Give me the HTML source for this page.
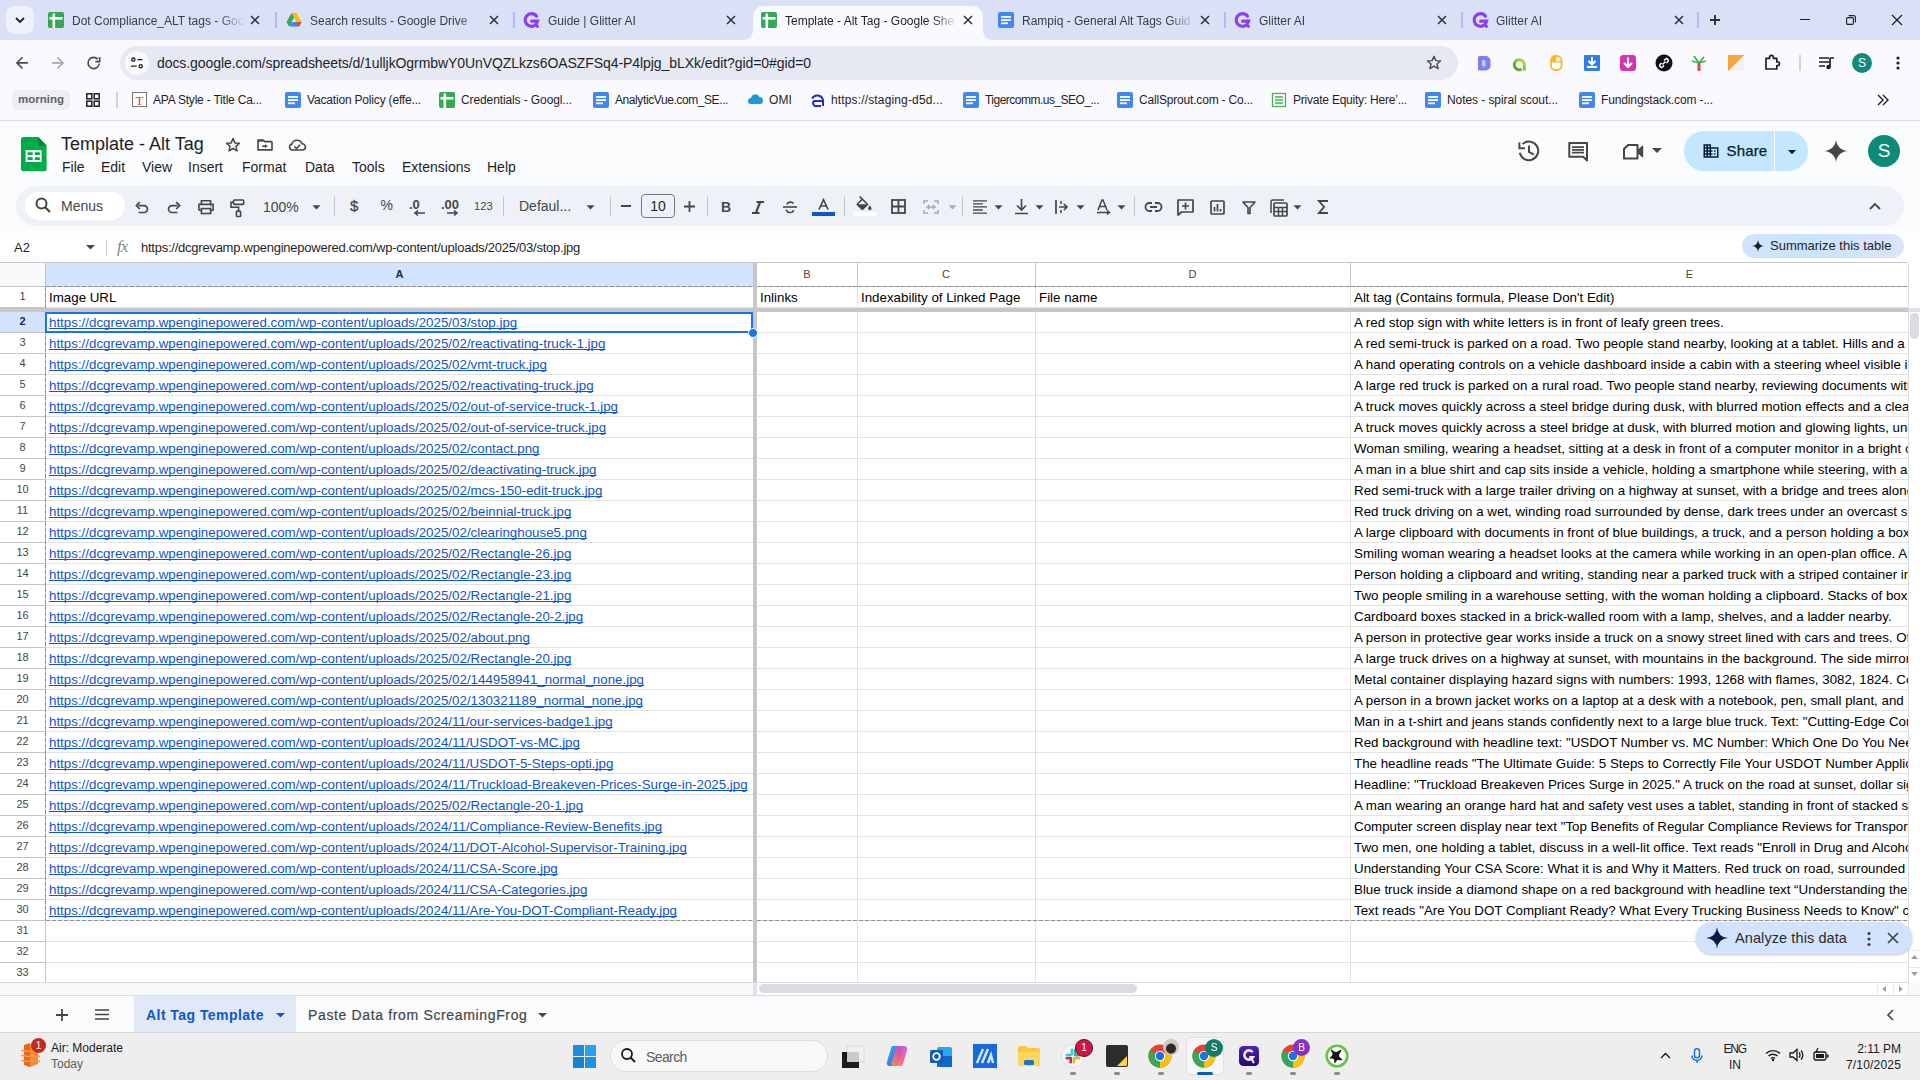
<!DOCTYPE html><html><head><meta charset="utf-8"><style>html,body{margin:0;padding:0;width:1920px;height:1080px;overflow:hidden;position:relative;font-family:"Liberation Sans",sans-serif;background:#fff}svg{overflow:visible}</style></head><body><div style="position:absolute;left:0px;top:0px;width:1920px;height:40px;background:#dae1f7"></div>
<div style="position:absolute;left:6px;top:6px;width:28px;height:28px;background:#eef1fb;border-radius:8px"></div>
<svg style="position:absolute;left:14px;top:14px;" width="12" height="12" viewBox="0 0 12 12"><path d="M2 4l4 4 4-4" fill="none" stroke="#1f1f1f" stroke-width="1.8"/></svg>
<div style="position:absolute;left:753px;top:6px;width:230px;height:34px;background:#f9f9fe;border-radius:10px 10px 0 0"></div>
<svg style="position:absolute;left:743px;top:30px;" width="10" height="10" viewBox="0 0 10 10"><path d="M0 10 Q10 10 10 0 L10 10 Z" fill="#f9f9fe"/></svg>
<svg style="position:absolute;left:983px;top:30px;" width="10" height="10" viewBox="0 0 10 10"><path d="M10 10 Q0 10 0 0 L0 10 Z" fill="#f9f9fe"/></svg>
<svg style="position:absolute;left:48px;top:12px;" width="16" height="16" viewBox="0 0 16 16"><rect x="0" y="0" width="16" height="16" rx="2" fill="#34a853"/><rect x="1.5" y="5" width="13" height="2.6" fill="#fff"/><rect x="4.5" y="1.5" width="2.6" height="14.5" fill="#fff"/></svg>
<div style="position:absolute;left:72px;top:13px;width:173px;height:16px;overflow:hidden;font-size:12px;line-height:16px;color:#3a3d44;white-space:pre;-webkit-mask-image:linear-gradient(90deg,#000 85%,transparent)">Dot Compliance_ALT tags - Goc</div>
<svg style="position:absolute;left:250px;top:15px;" width="10" height="10" viewBox="0 0 10 10"><path d="M1 1L9 9M9 1L1 9" stroke="#2d2f33" stroke-width="1.5"/></svg>
<svg style="position:absolute;left:286px;top:12px;" width="16" height="16" viewBox="0 0 16 16"><path d="M5.5 1h5l5 9h-5z" fill="#fbbc04"/><path d="M5.5 1L0.5 10l2.5 4.5L8 5.5z" fill="#34a853"/><path d="M3 14.5h10l2.5-4.5h-10z" fill="#4285f4"/><path d="M15.5 10L13 14.5 10.5 10z" fill="#ea4335"/></svg>
<div style="position:absolute;left:310px;top:13px;width:174px;height:16px;overflow:hidden;font-size:12px;line-height:16px;color:#3a3d44;white-space:pre;-webkit-mask-image:linear-gradient(90deg,#000 85%,transparent)">Search results - Google Drive</div>
<svg style="position:absolute;left:489px;top:15px;" width="10" height="10" viewBox="0 0 10 10"><path d="M1 1L9 9M9 1L1 9" stroke="#2d2f33" stroke-width="1.5"/></svg>
<svg style="position:absolute;left:523px;top:12px;" width="17" height="17" viewBox="0 0 17 17"><path d="M13.5 4.2A6.3 6.3 0 1 0 14.6 9.2H8.6" fill="none" stroke="#8b3ff0" stroke-width="3.2" stroke-linecap="round"/><circle cx="14.3" cy="14.3" r="1.6" fill="#8b3ff0"/></svg>
<div style="position:absolute;left:548px;top:13px;width:173px;height:16px;overflow:hidden;font-size:12px;line-height:16px;color:#3a3d44;white-space:pre;-webkit-mask-image:linear-gradient(90deg,#000 85%,transparent)">Guide | Glitter AI</div>
<svg style="position:absolute;left:726px;top:15px;" width="10" height="10" viewBox="0 0 10 10"><path d="M1 1L9 9M9 1L1 9" stroke="#2d2f33" stroke-width="1.5"/></svg>
<svg style="position:absolute;left:761px;top:12px;" width="16" height="16" viewBox="0 0 16 16"><rect x="0" y="0" width="16" height="16" rx="2" fill="#34a853"/><rect x="1.5" y="5" width="13" height="2.6" fill="#fff"/><rect x="4.5" y="1.5" width="2.6" height="14.5" fill="#fff"/></svg>
<div style="position:absolute;left:785px;top:13px;width:173px;height:16px;overflow:hidden;font-size:12px;line-height:16px;color:#1f1f1f;white-space:pre;-webkit-mask-image:linear-gradient(90deg,#000 85%,transparent)">Template - Alt Tag - Google She</div>
<svg style="position:absolute;left:963px;top:15px;" width="10" height="10" viewBox="0 0 10 10"><path d="M1 1L9 9M9 1L1 9" stroke="#2d2f33" stroke-width="1.5"/></svg>
<svg style="position:absolute;left:998px;top:12px;" width="16" height="16" viewBox="0 0 16 16"><rect x="0" y="0" width="16" height="16" rx="2" fill="#4285f4"/><rect x="3" y="4" width="10" height="1.8" fill="#fff"/><rect x="3" y="7.2" width="10" height="1.8" fill="#fff"/><rect x="3" y="10.4" width="7" height="1.8" fill="#fff"/></svg>
<div style="position:absolute;left:1022px;top:13px;width:173px;height:16px;overflow:hidden;font-size:12px;line-height:16px;color:#3a3d44;white-space:pre;-webkit-mask-image:linear-gradient(90deg,#000 85%,transparent)">Rampiq - General Alt Tags Guid</div>
<svg style="position:absolute;left:1200px;top:15px;" width="10" height="10" viewBox="0 0 10 10"><path d="M1 1L9 9M9 1L1 9" stroke="#2d2f33" stroke-width="1.5"/></svg>
<svg style="position:absolute;left:1234px;top:12px;" width="17" height="17" viewBox="0 0 17 17"><path d="M13.5 4.2A6.3 6.3 0 1 0 14.6 9.2H8.6" fill="none" stroke="#8b3ff0" stroke-width="3.2" stroke-linecap="round"/><circle cx="14.3" cy="14.3" r="1.6" fill="#8b3ff0"/></svg>
<div style="position:absolute;left:1259px;top:13px;width:173px;height:16px;overflow:hidden;font-size:12px;line-height:16px;color:#3a3d44;white-space:pre;-webkit-mask-image:linear-gradient(90deg,#000 85%,transparent)">Glitter AI</div>
<svg style="position:absolute;left:1437px;top:15px;" width="10" height="10" viewBox="0 0 10 10"><path d="M1 1L9 9M9 1L1 9" stroke="#2d2f33" stroke-width="1.5"/></svg>
<svg style="position:absolute;left:1472px;top:12px;" width="17" height="17" viewBox="0 0 17 17"><path d="M13.5 4.2A6.3 6.3 0 1 0 14.6 9.2H8.6" fill="none" stroke="#8b3ff0" stroke-width="3.2" stroke-linecap="round"/><circle cx="14.3" cy="14.3" r="1.6" fill="#8b3ff0"/></svg>
<div style="position:absolute;left:1496px;top:13px;width:173px;height:16px;overflow:hidden;font-size:12px;line-height:16px;color:#3a3d44;white-space:pre;-webkit-mask-image:linear-gradient(90deg,#000 85%,transparent)">Glitter AI</div>
<svg style="position:absolute;left:1674px;top:15px;" width="10" height="10" viewBox="0 0 10 10"><path d="M1 1L9 9M9 1L1 9" stroke="#2d2f33" stroke-width="1.5"/></svg>
<div style="position:absolute;left:275px;top:12px;width:1.5px;height:16px;background:#a8c0f4"></div>
<div style="position:absolute;left:513px;top:12px;width:1.5px;height:16px;background:#a8c0f4"></div>
<div style="position:absolute;left:1224px;top:12px;width:1.5px;height:16px;background:#a8c0f4"></div>
<div style="position:absolute;left:1461px;top:12px;width:1.5px;height:16px;background:#a8c0f4"></div>
<div style="position:absolute;left:1697px;top:12px;width:1.5px;height:16px;background:#a8c0f4"></div>
<svg style="position:absolute;left:1710px;top:15px;" width="10" height="10" viewBox="0 0 10 10"><path d="M5 0V10M0 5H10" stroke="#2d2f33" stroke-width="1.9"/></svg>
<div style="position:absolute;left:1800px;top:19px;width:10px;height:1px;background:#1f1f1f"></div>
<svg style="position:absolute;left:1846px;top:15px;" width="10" height="10" viewBox="0 0 10 10"><rect x="0.6" y="2.6" width="6.8" height="6.8" rx="1.2" fill="none" stroke="#1f1f1f" stroke-width="1.1"/><path d="M2.6 0.6H7.8A1.6 1.6 0 0 1 9.4 2.2V7.4" fill="none" stroke="#1f1f1f" stroke-width="1.1"/></svg>
<svg style="position:absolute;left:1891px;top:14px;" width="12" height="12" viewBox="0 0 12 12"><path d="M1 1L11 11M11 1L1 11" stroke="#1f1f1f" stroke-width="1.3"/></svg>
<div style="position:absolute;left:0px;top:40px;width:1920px;height:81px;background:#f9f9fe"></div>
<svg style="position:absolute;left:14px;top:55px;" width="16" height="16" viewBox="0 0 16 16"><path d="M13.9 7.9H3.2M8.5 2.3L2.9 7.9l5.6 5.6" fill="none" stroke="#474b55" stroke-width="1.6"/></svg>
<svg style="position:absolute;left:50px;top:55px;" width="16" height="16" viewBox="0 0 16 16"><path d="M2 7.9H12.7M7.4 2.3l5.6 5.6-5.6 5.6" fill="none" stroke="#a5a8b0" stroke-width="1.6"/></svg>
<svg style="position:absolute;left:86px;top:55px;" width="16" height="16" viewBox="0 0 16 16"><path d="M13.2 8.6A5.6 5.6 0 1 1 11.7 4.1" fill="none" stroke="#474b55" stroke-width="1.6"/><path d="M13.7 2.1V6.6H9.3" fill="none" stroke="#474b55" stroke-width="1.6"/></svg>
<div style="position:absolute;left:120px;top:46px;width:1338px;height:34px;background:#e6e9f3;border-radius:17px"></div>
<div style="position:absolute;left:125px;top:51px;width:24px;height:24px;background:#f8f9fe;border-radius:12px"></div>
<svg style="position:absolute;left:129px;top:55px;" width="16" height="16" viewBox="0 0 16 16"><circle cx="4.3" cy="4.6" r="1.6" fill="none" stroke="#1f1f1f" stroke-width="1.3"/><path d="M8.4 4.6h5M2 11.2h5.7" stroke="#1f1f1f" stroke-width="1.3"/><circle cx="11.7" cy="11.2" r="1.6" fill="none" stroke="#1f1f1f" stroke-width="1.3"/></svg>
<div style="position:absolute;left:157px;top:56.15px;font-size:14px;line-height:14px;color:#1f1f1f;font-weight:400;white-space:pre;letter-spacing:-0.073px;">docs.google.com/spreadsheets/d/1ulljkOgrmbwY0UnVQZLkzs6OASZFSq4-P4lpjg_bLXk/edit?gid=0#gid=0</div>
<svg style="position:absolute;left:1426px;top:55px;" width="16" height="16" viewBox="0 0 16 16"><path d="M8 1.3l1.9 4.3 4.6.4-3.5 3 1.1 4.6L8 11.1 3.9 13.6 5 9 1.5 6l4.6-.4z" fill="none" stroke="#474b55" stroke-width="1.4" stroke-linejoin="round"/></svg>
<svg style="position:absolute;left:1478px;top:55.5px;" width="13" height="14.5" viewBox="0 0 13 14.5"><path d="M0 1.5A1.5 1.5 0 0 1 1.5 0H7.5A5 5 0 0 1 12.5 5V9.5A5 5 0 0 1 7.5 14.5H1.5A1.5 1.5 0 0 1 0 13z" fill="#7b7ff5"/><rect x="4" y="4" width="3.5" height="6.5" rx="0.8" fill="#c9cbfb"/></svg>
<svg style="position:absolute;left:1512px;top:55.5px;" width="15" height="15" viewBox="0 0 15 15"><defs><linearGradient id="ag" x1="0" y1="1" x2="1" y2="0"><stop offset="0" stop-color="#3e9a1f"/><stop offset="1" stop-color="#b9e23c"/></linearGradient></defs><path d="M9.6 13.1A5 5 0 1 1 12.3 8.6V14.6" fill="none" stroke="url(#ag)" stroke-width="2.9"/></svg>
<svg style="position:absolute;left:1549.5px;top:55px;" width="12.5" height="16" viewBox="0 0 12.5 16"><rect x="1" y="1" width="10.5" height="14" rx="4.5" fill="#fff" stroke="#fbb823" stroke-width="1.8"/><path d="M1 6.5V5.5A4.5 4.5 0 0 1 5.5 1H6.2V6.5z" fill="#fbb823"/><path d="M1 6.8H11.5" stroke="#fbb823" stroke-width="1.3"/></svg>
<svg style="position:absolute;left:1583px;top:54px;" width="18" height="18" viewBox="0 0 18 18"><rect x="1" y="1" width="16" height="16" rx="1" fill="#2f7fe6"/><path d="M9 3v7M5.5 7l3.5 3.5L12.5 7M4 13h10" stroke="#fff" stroke-width="2" fill="none"/></svg>
<svg style="position:absolute;left:1619px;top:54px;" width="18" height="18" viewBox="0 0 18 18"><rect x="1" y="1" width="16" height="16" rx="3" fill="#d633b5"/><path d="M9 3.5v9M5 9l4 4 4-4" stroke="#fff" stroke-width="2.2" fill="none"/></svg>
<svg style="position:absolute;left:1655px;top:54px;" width="18" height="18" viewBox="0 0 18 18"><circle cx="9" cy="9" r="8.5" fill="#111"/><path d="M7.5 10.5l3-3M6.5 9l-1.5 1.5a1.8 1.8 0 0 0 2.5 2.5L9 11.5M11.5 9l1.5-1.5a1.8 1.8 0 0 0-2.5-2.5L9 6.5" stroke="#fff" stroke-width="1.5" fill="none"/></svg>
<svg style="position:absolute;left:1690px;top:54px;" width="18" height="18" viewBox="0 0 18 18"><path d="M9 17V8" stroke="#d94a4a" stroke-width="3"/><path d="M9 9L4 2M9 9l5-6M9 9L2 7M9 9l7-2" stroke="#4caf50" stroke-width="1.8"/></svg>
<svg style="position:absolute;left:1727px;top:54px;" width="18" height="18" viewBox="0 0 18 18"><rect x="1" y="1" width="16" height="16" fill="#f4c26a"/><path d="M1 17L17 1V17z" fill="#f1f1f1"/><path d="M1 1h16L1 17z" fill="#f6a53a"/></svg>
<svg style="position:absolute;left:1764px;top:54px;" width="17" height="16" viewBox="0 0 17 16"><path d="M2 4.3H5.6V3.2a1.9 1.9 0 0 1 3.8 0V4.3H12.8V7.8H13.6a1.9 1.9 0 0 1 0 3.8H12.8V15H2z" fill="none" stroke="#1f1f1f" stroke-width="1.7" stroke-linejoin="round"/></svg>
<div style="position:absolute;left:1799px;top:55px;width:1.5px;height:16px;background:#c5d3f5"></div>
<svg style="position:absolute;left:1817px;top:54px;" width="18" height="18" viewBox="0 0 18 18"><path d="M2 4h10M2 8h10M2 12h6" stroke="#1f1f1f" stroke-width="1.7"/><path d="M13 4h4M13 4v9" stroke="#1f1f1f" stroke-width="1.7"/><circle cx="11.5" cy="13" r="2.2" fill="#1f1f1f"/></svg>
<div style="position:absolute;left:1852px;top:53px;width:20px;height:20px;border-radius:10px;background:#128a7a;color:#fff;font-size:12px;line-height:20px;text-align:center">S</div>
<svg style="position:absolute;left:1894px;top:54px;" width="8" height="18" viewBox="0 0 8 18"><circle cx="4" cy="4" r="1.6" fill="#1f1f1f"/><circle cx="4" cy="9" r="1.6" fill="#1f1f1f"/><circle cx="4" cy="14" r="1.6" fill="#1f1f1f"/></svg>
<div style="position:absolute;left:12px;top:90px;width:58px;height:20px;background:#eceef4;border-radius:6px"></div>
<div style="position:absolute;left:18px;top:94.27px;font-size:11.5px;line-height:11.5px;color:#5f6368;font-weight:700;white-space:pre;">morning</div>
<svg style="position:absolute;left:86px;top:93px;" width="14" height="14" viewBox="0 0 14 14"><rect x="0.8" y="0.8" width="5" height="5" fill="none" stroke="#1f1f1f" stroke-width="1.5"/><rect x="8.2" y="0.8" width="5" height="5" fill="none" stroke="#1f1f1f" stroke-width="1.5"/><rect x="0.8" y="8.2" width="5" height="5" fill="none" stroke="#1f1f1f" stroke-width="1.5"/><rect x="8.2" y="8.2" width="5" height="5" fill="none" stroke="#1f1f1f" stroke-width="1.5"/></svg>
<div style="position:absolute;left:116px;top:92px;width:1.5px;height:16px;background:#c5d3f5"></div>
<svg style="position:absolute;left:132px;top:92px;" width="15" height="15" viewBox="0 0 15 15"><rect x="0.5" y="0.5" width="14" height="14" fill="#fff" stroke="#777" stroke-width="1"/><text x="7.5" y="12.5" font-size="13" font-family="Liberation Serif" text-anchor="middle" fill="#e33">T</text></svg>
<div style="position:absolute;left:153px;top:94.34px;font-size:12px;line-height:12px;color:#1f1f1f;font-weight:400;white-space:pre;letter-spacing:-0.210px;">APA Style - Title Ca...</div>
<svg style="position:absolute;left:285px;top:92px;" width="16" height="16" viewBox="0 0 16 16"><rect x="0" y="0" width="16" height="16" rx="2" fill="#4285f4"/><rect x="3" y="4" width="10" height="1.8" fill="#fff"/><rect x="3" y="7.2" width="10" height="1.8" fill="#fff"/><rect x="3" y="10.4" width="7" height="1.8" fill="#fff"/></svg>
<div style="position:absolute;left:307px;top:94.34px;font-size:12px;line-height:12px;color:#1f1f1f;font-weight:400;white-space:pre;letter-spacing:-0.179px;">Vacation Policy (effe...</div>
<svg style="position:absolute;left:439px;top:92px;" width="16" height="16" viewBox="0 0 16 16"><rect x="0" y="0" width="16" height="16" rx="2" fill="#34a853"/><rect x="1.5" y="5" width="13" height="2.6" fill="#fff"/><rect x="4.5" y="1.5" width="2.6" height="14.5" fill="#fff"/></svg>
<div style="position:absolute;left:461px;top:94.34px;font-size:12px;line-height:12px;color:#1f1f1f;font-weight:400;white-space:pre;letter-spacing:-0.109px;">Credentials - Googl...</div>
<svg style="position:absolute;left:593px;top:92px;" width="16" height="16" viewBox="0 0 16 16"><rect x="0" y="0" width="16" height="16" rx="2" fill="#4285f4"/><rect x="3" y="4" width="10" height="1.8" fill="#fff"/><rect x="3" y="7.2" width="10" height="1.8" fill="#fff"/><rect x="3" y="10.4" width="7" height="1.8" fill="#fff"/></svg>
<div style="position:absolute;left:615px;top:94.34px;font-size:12px;line-height:12px;color:#1f1f1f;font-weight:400;white-space:pre;letter-spacing:-0.411px;">AnalyticVue.com_SE...</div>
<svg style="position:absolute;left:747px;top:92px;" width="16" height="16" viewBox="0 0 16 16"><path d="M4 12a3 3 0 0 1 0-6 4.5 4.5 0 0 1 8.5-1A3.5 3.5 0 0 1 12.5 12z" fill="#1c9ad6"/></svg>
<div style="position:absolute;left:769px;top:94.34px;font-size:12px;line-height:12px;color:#1f1f1f;font-weight:400;white-space:pre;letter-spacing:0.109px;">OMI</div>
<svg style="position:absolute;left:809px;top:92px;" width="16" height="16" viewBox="0 0 16 16"><path d="M3 6.5A6 6 0 0 1 14 8V14M14 9H5A3 3 0 0 0 8 14H12" fill="none" stroke="#2730b8" stroke-width="2"/></svg>
<div style="position:absolute;left:831px;top:94.34px;font-size:12px;line-height:12px;color:#1f1f1f;font-weight:400;white-space:pre;letter-spacing:0.148px;">https://staging-d5d...</div>
<svg style="position:absolute;left:963px;top:92px;" width="16" height="16" viewBox="0 0 16 16"><rect x="0" y="0" width="16" height="16" rx="2" fill="#4285f4"/><rect x="3" y="4" width="10" height="1.8" fill="#fff"/><rect x="3" y="7.2" width="10" height="1.8" fill="#fff"/><rect x="3" y="10.4" width="7" height="1.8" fill="#fff"/></svg>
<div style="position:absolute;left:985px;top:94.34px;font-size:12px;line-height:12px;color:#1f1f1f;font-weight:400;white-space:pre;letter-spacing:-0.513px;">Tigercomm.us_SEO_...</div>
<svg style="position:absolute;left:1117px;top:92px;" width="16" height="16" viewBox="0 0 16 16"><rect x="0" y="0" width="16" height="16" rx="2" fill="#4285f4"/><rect x="3" y="4" width="10" height="1.8" fill="#fff"/><rect x="3" y="7.2" width="10" height="1.8" fill="#fff"/><rect x="3" y="10.4" width="7" height="1.8" fill="#fff"/></svg>
<div style="position:absolute;left:1139px;top:94.34px;font-size:12px;line-height:12px;color:#1f1f1f;font-weight:400;white-space:pre;letter-spacing:-0.184px;">CallSprout.com - Co...</div>
<svg style="position:absolute;left:1271px;top:92px;" width="16" height="16" viewBox="0 0 16 16"><rect x="1.5" y="1.5" width="13" height="13" fill="none" stroke="#4caf50" stroke-width="1.3"/><path d="M4 5h8M4 8h8M4 11h8" stroke="#4caf50" stroke-width="1.3"/></svg>
<div style="position:absolute;left:1293px;top:94.34px;font-size:12px;line-height:12px;color:#1f1f1f;font-weight:400;white-space:pre;letter-spacing:-0.225px;">Private Equity: Here’...</div>
<svg style="position:absolute;left:1425px;top:92px;" width="16" height="16" viewBox="0 0 16 16"><rect x="0" y="0" width="16" height="16" rx="2" fill="#4285f4"/><rect x="3" y="4" width="10" height="1.8" fill="#fff"/><rect x="3" y="7.2" width="10" height="1.8" fill="#fff"/><rect x="3" y="10.4" width="7" height="1.8" fill="#fff"/></svg>
<div style="position:absolute;left:1447px;top:94.34px;font-size:12px;line-height:12px;color:#1f1f1f;font-weight:400;white-space:pre;letter-spacing:-0.075px;">Notes - spiral scout...</div>
<svg style="position:absolute;left:1579px;top:92px;" width="16" height="16" viewBox="0 0 16 16"><rect x="0" y="0" width="16" height="16" rx="2" fill="#4285f4"/><rect x="3" y="4" width="10" height="1.8" fill="#fff"/><rect x="3" y="7.2" width="10" height="1.8" fill="#fff"/><rect x="3" y="10.4" width="7" height="1.8" fill="#fff"/></svg>
<div style="position:absolute;left:1601px;top:94.34px;font-size:12px;line-height:12px;color:#1f1f1f;font-weight:400;white-space:pre;letter-spacing:-0.129px;">Fundingstack.com -...</div>
<svg style="position:absolute;left:1877px;top:94px;" width="12" height="12" viewBox="0 0 12 12"><path d="M1 1l5 5-5 5M6 1l5 5-5 5" fill="none" stroke="#1f1f1f" stroke-width="1.4"/></svg>
<div style="position:absolute;left:0px;top:120px;width:1920px;height:1px;background:#dadce5"></div>
<div style="position:absolute;left:0px;top:121px;width:1920px;height:112px;background:#f9fbfd"></div>
<svg style="position:absolute;left:21px;top:137px;" width="26" height="35" viewBox="0 0 26 35"><path d="M0 2.5A2.5 2.5 0 0 1 2.5 0H17.2L25.6 8.6V31.8A2.5 2.5 0 0 1 23.1 34.3H2.5A2.5 2.5 0 0 1 0 31.8z" fill="#00ac47"/><path d="M17.2 0V8.6H25.6z" fill="#008b38"/><rect x="4.6" y="13.2" width="16" height="11.8" fill="#fff"/><rect x="6.5" y="15.2" width="5.2" height="2.9" rx="0.4" fill="#00ac47"/><rect x="13.7" y="15.2" width="5.2" height="2.9" rx="0.4" fill="#00ac47"/><rect x="6.5" y="20.2" width="5.2" height="2.9" rx="0.4" fill="#00ac47"/><rect x="13.7" y="20.2" width="5.2" height="2.9" rx="0.4" fill="#00ac47"/></svg>
<div style="position:absolute;left:61px;top:134.76px;font-size:18px;line-height:18px;color:#1f1f1f;font-weight:400;white-space:pre;">Template - Alt Tag</div>
<svg style="position:absolute;left:225px;top:137px;" width="16" height="16" viewBox="0 0 16 16"><path d="M8 1.6l1.85 4.3 4.6.4-3.5 3.05 1.05 4.55L8 11.5 4 13.9l1.05-4.55L1.55 6.3l4.6-.4z" fill="none" stroke="#444746" stroke-width="1.5" stroke-linejoin="round"/></svg>
<svg style="position:absolute;left:257px;top:139px;" width="16" height="12" viewBox="0 0 16 12"><path d="M1 1H6.1L7.7 2.6H14.1A0.9 0.9 0 0 1 15 3.5V10.9H1z" fill="none" stroke="#444746" stroke-width="1.6" stroke-linejoin="round"/><path d="M1 1.8H6.5" stroke="#444746" stroke-width="1.6"/><path d="M5.1 7.15H8.6" stroke="#444746" stroke-width="1.6"/><path d="M8 5.2L10.9 7.15 8 9.1z" fill="#444746"/></svg>
<svg style="position:absolute;left:288px;top:139px;" width="18" height="12" viewBox="0 0 18 12"><path d="M4.3 11A3 3 0 0 1 3.9 5.1 5.3 5.3 0 0 1 14 4.8 3.1 3.1 0 0 1 14.6 11z" fill="none" stroke="#444746" stroke-width="1.6" stroke-linejoin="round"/><path d="M6.4 7.5l2.1 2 3.6-3.8" fill="none" stroke="#444746" stroke-width="1.6"/></svg>
<div style="position:absolute;left:62px;top:160.15px;font-size:14px;line-height:14px;color:#1f1f1f;font-weight:400;white-space:pre;">File</div>
<div style="position:absolute;left:101px;top:160.15px;font-size:14px;line-height:14px;color:#1f1f1f;font-weight:400;white-space:pre;">Edit</div>
<div style="position:absolute;left:142px;top:160.15px;font-size:14px;line-height:14px;color:#1f1f1f;font-weight:400;white-space:pre;">View</div>
<div style="position:absolute;left:188px;top:160.15px;font-size:14px;line-height:14px;color:#1f1f1f;font-weight:400;white-space:pre;">Insert</div>
<div style="position:absolute;left:242px;top:160.15px;font-size:14px;line-height:14px;color:#1f1f1f;font-weight:400;white-space:pre;">Format</div>
<div style="position:absolute;left:305px;top:160.15px;font-size:14px;line-height:14px;color:#1f1f1f;font-weight:400;white-space:pre;">Data</div>
<div style="position:absolute;left:352px;top:160.15px;font-size:14px;line-height:14px;color:#1f1f1f;font-weight:400;white-space:pre;">Tools</div>
<div style="position:absolute;left:402px;top:160.15px;font-size:14px;line-height:14px;color:#1f1f1f;font-weight:400;white-space:pre;">Extensions</div>
<div style="position:absolute;left:487px;top:160.15px;font-size:14px;line-height:14px;color:#1f1f1f;font-weight:400;white-space:pre;">Help</div>
<svg style="position:absolute;left:1517px;top:139px;" width="24" height="24" viewBox="0 0 24 24"><path d="M2.8 13.8A9.3 9.3 0 1 0 5.6 5" fill="none" stroke="#444746" stroke-width="2"/><path d="M2.4 3.6V9.3H8" fill="none" stroke="#444746" stroke-width="2"/><path d="M12 6.6V13L16.8 15.6" fill="none" stroke="#444746" stroke-width="2"/></svg>
<svg style="position:absolute;left:1566px;top:140px;" width="24" height="24" viewBox="0 0 24 24"><path d="M3.3 3H21V20.5L17.2 16.8H3.3z" fill="none" stroke="#444746" stroke-width="2" stroke-linejoin="round"/><path d="M6 7.1H18M6 9.8H18M6 12.7H18" stroke="#444746" stroke-width="1.7"/></svg>
<svg style="position:absolute;left:1621px;top:141px;" width="24" height="21" viewBox="0 0 24 21"><path d="M7 4H16.5V17.5H3V8z" fill="none" stroke="#444746" stroke-width="2" stroke-linejoin="round"/><path d="M17 9.5L21.6 5.2V15.8L17 11.5z" fill="#444746" stroke="#444746" stroke-width="1.2" stroke-linejoin="round"/></svg>
<svg style="position:absolute;left:1652px;top:148px;" width="10" height="6" viewBox="0 0 10 6"><path d="M0 0h10L5 5z" fill="#444746"/></svg>
<div style="position:absolute;left:1684px;top:131px;width:124px;height:40px;border-radius:20px;background:#c2e7ff"></div>
<div style="position:absolute;left:1774px;top:131px;width:1px;height:40px;background:#f9fbfd"></div>
<svg style="position:absolute;left:1701.5px;top:142px;" width="18" height="18" viewBox="0 0 24 24"><path d="M12 7V3H2v18h20V7H12zM6 19H4v-2h2v2zm0-4H4v-2h2v2zm0-4H4V9h2v2zm0-4H4V5h2v2zm4 12H8v-2h2v2zm0-4H8v-2h2v2zm0-4H8V9h2v2zm0-4H8V5h2v2zm10 12h-8v-2h2v-2h-2v-2h2v-2h-2V9h8v10zm-2-8h-2v2h2v-2zm0 4h-2v2h2v-2z" fill="#001d35"/></svg>
<div style="position:absolute;left:1726.5px;top:143.30px;font-size:15px;line-height:15px;color:#001d35;font-weight:400;white-space:pre;letter-spacing:0.15px;-webkit-text-stroke:0.25px #001d35">Share</div>
<svg style="position:absolute;left:1787.5px;top:149.7px;" width="8" height="4.5" viewBox="0 0 8 4.5"><path d="M0 0h8L4 4.3z" fill="#001d35"/></svg>
<svg style="position:absolute;left:1825px;top:140px;" width="22" height="22" viewBox="0 0 22 22"><path d="M11 0C11.8 6 16 10.2 22 11 16 11.8 11.8 16 11 22 10.2 16 6 11.8 0 11 6 10.2 10.2 6 11 0z" fill="#444746"/></svg>
<div style="position:absolute;left:1868px;top:135px;width:32px;height:32px;border-radius:16px;background:#0d8a78;color:#fff;font-size:19px;line-height:32px;text-align:center">S</div>
<div style="position:absolute;left:16px;top:186px;width:1888px;height:40px;background:#eef2f8;border-radius:20px"></div>
<div style="position:absolute;left:25px;top:192px;width:100px;height:28px;background:#fff;border-radius:14px"></div>
<svg style="position:absolute;left:35px;top:197px;" width="16" height="18" viewBox="0 0 16 18"><circle cx="6.5" cy="6.5" r="5" fill="none" stroke="#444746" stroke-width="2"/><path d="M10 10l5 5" stroke="#444746" stroke-width="2.2"/></svg>
<div style="position:absolute;left:61px;top:198.65px;font-size:14px;line-height:14px;color:#444746;font-weight:400;white-space:pre;">Menus</div>
<svg style="position:absolute;left:134px;top:199px;" width="16" height="16" viewBox="0 0 16 16"><path d="M4.5 6.6H10a3.45 3.45 0 0 1 0 6.9H4.5" fill="none" stroke="#444746" stroke-width="1.7"/><path d="M5.8 3.2L2.4 6.6 5.8 10" fill="none" stroke="#444746" stroke-width="1.7"/></svg>
<svg style="position:absolute;left:166px;top:199px;" width="16" height="16" viewBox="0 0 16 16"><path d="M11.5 6.6H6a3.45 3.45 0 0 0 0 6.9h5.5" fill="none" stroke="#444746" stroke-width="1.7"/><path d="M10.2 3.2l3.4 3.4-3.4 3.4" fill="none" stroke="#444746" stroke-width="1.7"/></svg>
<svg style="position:absolute;left:198px;top:199px;" width="16" height="16" viewBox="0 0 16 16"><path d="M3.4 5V1.7H12.6V5" fill="none" stroke="#444746" stroke-width="1.6"/><path d="M0.9 11.2V5.4H15.1V11.2H12.6M3.4 11.2H0.9" fill="none" stroke="#444746" stroke-width="1.6"/><rect x="3.4" y="9.6" width="9.2" height="4.9" fill="none" stroke="#444746" stroke-width="1.6"/><circle cx="12.8" cy="7.2" r="0.6" fill="#444746"/></svg>
<svg style="position:absolute;left:229px;top:199px;" width="16" height="19" viewBox="0 0 16 19"><rect x="4.5" y="1" width="10.2" height="4.4" rx="1" fill="none" stroke="#444746" stroke-width="1.6"/><path d="M4.5 3.2H2V8.3H9.6V12" fill="none" stroke="#444746" stroke-width="1.6"/><rect x="7.4" y="12.1" width="4.2" height="5.4" rx="0.8" fill="none" stroke="#444746" stroke-width="1.6"/></svg>
<div style="position:absolute;left:263px;top:200.15px;font-size:14px;line-height:14px;color:#444746;font-weight:400;white-space:pre;">100%</div>
<svg style="position:absolute;left:312px;top:204.5px;" width="9" height="5" viewBox="0 0 9 5"><path d="M0.5 0.3h8L4.5 4.6z" fill="#444746"/></svg>
<div style="position:absolute;left:334px;top:196px;width:1px;height:20px;background:#c7c7c7"></div>
<div style="position:absolute;left:503px;top:196px;width:1px;height:20px;background:#c7c7c7"></div>
<div style="position:absolute;left:610px;top:196px;width:1px;height:20px;background:#c7c7c7"></div>
<div style="position:absolute;left:707px;top:196px;width:1px;height:20px;background:#c7c7c7"></div>
<div style="position:absolute;left:844px;top:196px;width:1px;height:20px;background:#c7c7c7"></div>
<div style="position:absolute;left:962px;top:196px;width:1px;height:20px;background:#c7c7c7"></div>
<div style="position:absolute;left:1134px;top:196px;width:1px;height:20px;background:#c7c7c7"></div>
<div style="position:absolute;left:350px;top:198.30px;font-size:15px;line-height:15px;color:#444746;font-weight:400;white-space:pre;-webkit-text-stroke:0.3px #444746">$</div>
<div style="position:absolute;left:380.5px;top:198.15px;font-size:14px;line-height:14px;color:#444746;font-weight:400;white-space:pre;">%</div>
<div style="position:absolute;left:409px;top:198.00px;font-size:13px;line-height:13px;color:#444746;font-weight:700;white-space:pre;">.0</div>
<svg style="position:absolute;left:412px;top:210px;" width="14" height="6" viewBox="0 0 14 6"><path d="M13 3H3M6 0.5L3 3l3 2.5" fill="none" stroke="#444746" stroke-width="1.6"/></svg>
<div style="position:absolute;left:441px;top:198.00px;font-size:13px;line-height:13px;color:#444746;font-weight:700;white-space:pre;">.00</div>
<svg style="position:absolute;left:446px;top:210px;" width="14" height="6" viewBox="0 0 14 6"><path d="M1 3H11M8 0.5L11 3 8 5.5" fill="none" stroke="#444746" stroke-width="1.6"/></svg>
<div style="position:absolute;left:474px;top:200.52px;font-size:11.2px;line-height:11.2px;color:#444746;font-weight:400;white-space:pre;">123</div>
<div style="position:absolute;left:519px;top:199.15px;font-size:14px;line-height:14px;color:#444746;font-weight:400;white-space:pre;">Defaul...</div>
<svg style="position:absolute;left:586px;top:204.5px;" width="9" height="5" viewBox="0 0 9 5"><path d="M0.5 0.3h8L4.5 4.6z" fill="#444746"/></svg>
<div style="position:absolute;left:621px;top:205px;width:10px;height:1.8px;background:#444746"></div>
<div style="position:absolute;left:641px;top:194px;width:32px;height:22px;border:1px solid #747775;border-radius:4px;font-size:14px;line-height:22px;text-align:center;color:#1f1f1f">10</div>
<svg style="position:absolute;left:684px;top:201px;" width="11" height="11" viewBox="0 0 11 11"><path d="M5.5 0V11M0 5.5H11" stroke="#444746" stroke-width="1.8"/></svg>
<div style="position:absolute;left:721px;top:200.15px;font-size:14px;line-height:14px;color:#444746;font-weight:700;white-space:pre;">B</div>
<svg style="position:absolute;left:752px;top:201px;" width="12" height="13" viewBox="0 0 12 13"><path d="M4.5 0H12V2H4.5zM0 11H7.5V13H0zM6.6 2H9L5.4 11H3z" fill="#444746"/></svg>
<svg style="position:absolute;left:782px;top:199px;" width="16" height="16" viewBox="0 0 16 16"><path d="M1 8H15" stroke="#444746" stroke-width="1.6"/><path d="M11.5 4.5A3.5 2.8 0 0 0 5 5.5M4.5 10.5A3.5 2.8 0 0 0 11.5 11" fill="none" stroke="#444746" stroke-width="1.6"/></svg>
<svg style="position:absolute;left:817.5px;top:199px;" width="11" height="11" viewBox="0 0 11 11"><path d="M0.9 10.6L5.5 0.6 10.1 10.6M2.6 7.1H8.4" fill="none" stroke="#444746" stroke-width="1.5"/></svg>
<div style="position:absolute;left:812px;top:212px;width:23px;height:4px;background:#0b57d0"></div>
<svg style="position:absolute;left:854px;top:196px;" width="20" height="20" viewBox="0 0 24 24"><path d="M16.56 8.94L7.62 0 6.21 1.41l2.38 2.38-5.15 5.15c-.59.59-.59 1.54 0 2.12l5.5 5.5c.29.29.68.44 1.06.44s.77-.15 1.06-.44l5.5-5.5c.59-.58.59-1.53 0-2.12zM5.21 10L10 5.21 14.79 10H5.21zM19 11.5s-2 2.17-2 3.5c0 1.1.9 2 2 2s2-.9 2-2c0-1.33-2-3.5-2-3.5z" fill="#444746"/></svg>
<div style="position:absolute;left:853px;top:212px;width:23px;height:4px;background:#ffffff"></div>
<svg style="position:absolute;left:891px;top:199px;" width="15" height="15" viewBox="0 0 15 15"><rect x="1" y="1" width="13" height="13" fill="none" stroke="#444746" stroke-width="1.8"/><path d="M7.5 1V14M1 7.5H14" stroke="#444746" stroke-width="1.8"/></svg>
<svg style="position:absolute;left:923px;top:200px;" width="16" height="14" viewBox="0 0 16 14"><path d="M1 4V1h4M11 1h4v3M1 10v3h4M11 13h4v-3M3 7h4M5 5l2 2-2 2M13 7H9M11 5L9 7l2 2" fill="none" stroke="#a8abaf" stroke-width="1.6"/></svg>
<svg style="position:absolute;left:948px;top:204.5px;" width="9" height="5" viewBox="0 0 9 5"><path d="M0.5 0.3h8L4.5 4.6z" fill="#a8abaf"/></svg>
<svg style="position:absolute;left:973px;top:199px;" width="14" height="14" viewBox="0 0 14 14"><path d="M0 1.8H14M0 4.9H9.8M0 7.9H14M0 11H9.8M0 14.2H14" stroke="#444746" stroke-width="1.3"/></svg>
<svg style="position:absolute;left:994px;top:204.5px;" width="9" height="5" viewBox="0 0 9 5"><path d="M0.5 0.3h8L4.5 4.6z" fill="#444746"/></svg>
<svg style="position:absolute;left:1015px;top:199px;" width="13" height="16" viewBox="0 0 13 16"><path d="M6.5 0V11M2 6.5l4.5 4.5 4.5-4.5M0 14.5H13" fill="none" stroke="#444746" stroke-width="1.7"/></svg>
<svg style="position:absolute;left:1035px;top:204.5px;" width="9" height="5" viewBox="0 0 9 5"><path d="M0.5 0.3h8L4.5 4.6z" fill="#444746"/></svg>
<svg style="position:absolute;left:1055px;top:200px;" width="14" height="14" viewBox="0 0 14 14"><path d="M1 0V14" stroke="#444746" stroke-width="1.7"/><path d="M4 7H12M9 4l3 3-3 3" fill="none" stroke="#444746" stroke-width="1.7"/><path d="M6 1V4M6 10V13" stroke="#444746" stroke-width="1.5"/></svg>
<svg style="position:absolute;left:1076px;top:204.5px;" width="9" height="5" viewBox="0 0 9 5"><path d="M0.5 0.3h8L4.5 4.6z" fill="#444746"/></svg>
<svg style="position:absolute;left:1097px;top:200px;" width="14" height="15" viewBox="0 0 14 15"><path d="M1 10L5 0h1l4 10M2.5 6.5h6" fill="none" stroke="#444746" stroke-width="1.5"/><path d="M0 12.5H12M10 10.5l2.5 2-2.5 2" fill="none" stroke="#444746" stroke-width="1.5"/></svg>
<svg style="position:absolute;left:1117px;top:204.5px;" width="9" height="5" viewBox="0 0 9 5"><path d="M0.5 0.3h8L4.5 4.6z" fill="#444746"/></svg>
<svg style="position:absolute;left:1145px;top:202px;" width="17" height="10" viewBox="0 0 17 10"><path d="M7 1H4.5a4 4 0 0 0 0 8H7M10 1h2.5a4 4 0 0 1 0 8H10M5 5h7" fill="none" stroke="#444746" stroke-width="1.8"/></svg>
<svg style="position:absolute;left:1177px;top:199px;" width="17" height="17" viewBox="0 0 17 17"><path d="M1 1H16V13H4.5L1 16z" fill="none" stroke="#444746" stroke-width="1.7" stroke-linejoin="round"/><path d="M8.5 3.5V10.5M5 7H12" stroke="#444746" stroke-width="1.7"/></svg>
<svg style="position:absolute;left:1210px;top:200px;" width="15" height="15" viewBox="0 0 15 15"><rect x="1" y="1" width="13" height="13" rx="1" fill="none" stroke="#444746" stroke-width="1.7"/><path d="M4.5 11.5V7M7.5 11.5V4M10.5 11.5V9" stroke="#444746" stroke-width="1.7"/></svg>
<svg style="position:absolute;left:1242px;top:201px;" width="14" height="13" viewBox="0 0 14 13"><path d="M1 1H13L8 6.5V12.5H6V6.5z" fill="none" stroke="#444746" stroke-width="1.6" stroke-linejoin="round"/></svg>
<svg style="position:absolute;left:1270px;top:199px;" width="18" height="18" viewBox="0 0 18 18"><path d="M1 14V3a2 2 0 0 1 2-2H14" fill="none" stroke="#444746" stroke-width="1.5"/><rect x="4" y="4" width="13" height="13" rx="1" fill="none" stroke="#444746" stroke-width="1.7"/><path d="M4 8.5H17M4 12.5H17M8.5 8.5V17M12.5 8.5V17" stroke="#444746" stroke-width="1.5"/></svg>
<svg style="position:absolute;left:1293px;top:204.5px;" width="9" height="5" viewBox="0 0 9 5"><path d="M0.5 0.3h8L4.5 4.6z" fill="#444746"/></svg>
<svg style="position:absolute;left:1318px;top:200px;" width="10" height="14" viewBox="0 0 10 14"><path d="M10 1H1L6 7 1 13H10" fill="none" stroke="#444746" stroke-width="1.9" stroke-linejoin="miter"/></svg>
<svg style="position:absolute;left:1869px;top:202px;" width="12" height="8" viewBox="0 0 12 8"><path d="M1 7l5-5 5 5" fill="none" stroke="#444746" stroke-width="1.8"/></svg>
<div style="position:absolute;left:0px;top:233px;width:1920px;height:30px;background:#ffffff"></div>
<div style="position:absolute;left:14px;top:241.00px;font-size:13px;line-height:13px;color:#1f1f1f;font-weight:400;white-space:pre;">A2</div>
<svg style="position:absolute;left:86px;top:245px;" width="9" height="5" viewBox="0 0 9 5"><path d="M0 0h9L4.5 4.5z" fill="#444746"/></svg>
<div style="position:absolute;left:106px;top:240px;width:1px;height:16px;background:#c7c7c7"></div>
<div style="position:absolute;left:117px;top:238.11px;font-size:17px;line-height:17px;color:#80868b;font-weight:400;white-space:pre;font-style:italic;font-family:Liberation Serif;letter-spacing:-1px">fx</div>
<div style="position:absolute;left:141px;top:241.00px;font-size:13px;line-height:13px;color:#1f1f1f;font-weight:400;white-space:pre;letter-spacing:-0.243px;">https://dcgrevamp.wpenginepowered.com/wp-content/uploads/2025/03/stop.jpg</div>
<div style="position:absolute;left:1742px;top:234px;width:162px;height:24px;border-radius:12px;background:linear-gradient(90deg,#d3e3fd,#c8e4fc 40%,#dde3fb)"></div>
<svg style="position:absolute;left:1752px;top:240px;" width="12" height="12" viewBox="0 0 12 12"><path d="M6 0Q6.5 5.5 12 6Q6.5 6.5 6 12Q5.5 6.5 0 6Q5.5 5.5 6 0z" fill="#1f1f1f"/></svg>
<div style="position:absolute;left:1770px;top:239.00px;font-size:13px;line-height:13px;color:#1f1f1f;font-weight:400;white-space:pre;">Summarize this table</div>
<div style="position:absolute;left:0px;top:262px;width:1908px;height:721px;background:#ffffff"></div>
<div style="position:absolute;left:0px;top:262px;width:1908px;height:1px;background:#c7c7c7"></div>
<div style="position:absolute;left:0px;top:263px;width:45px;height:23px;background:#f8f9fa"></div>
<div style="position:absolute;left:46px;top:263px;width:707px;height:23px;background:#d3e3fd"></div>
<div style="position:absolute;left:46px;top:268.69px;width:707px;text-align:center;font-size:11px;line-height:11px;color:#0b2b6a;font-weight:700;white-space:pre">A</div>
<div style="position:absolute;left:757px;top:268.69px;width:100px;text-align:center;font-size:11px;line-height:11px;color:#444746;font-weight:400;white-space:pre">B</div>
<div style="position:absolute;left:857px;top:268.69px;width:178px;text-align:center;font-size:11px;line-height:11px;color:#444746;font-weight:400;white-space:pre">C</div>
<div style="position:absolute;left:1035px;top:268.69px;width:315px;text-align:center;font-size:11px;line-height:11px;color:#444746;font-weight:400;white-space:pre">D</div>
<div style="position:absolute;left:1350px;top:268.69px;width:679px;text-align:center;font-size:11px;line-height:11px;color:#444746;font-weight:400;white-space:pre">E</div>
<div style="position:absolute;left:45px;top:263px;width:1px;height:23px;background:#c7c7c7"></div>
<div style="position:absolute;left:857px;top:263px;width:1px;height:23px;background:#c7c7c7"></div>
<div style="position:absolute;left:1035px;top:263px;width:1px;height:23px;background:#c7c7c7"></div>
<div style="position:absolute;left:1350px;top:263px;width:1px;height:23px;background:#c7c7c7"></div>
<div style="position:absolute;left:1908px;top:263px;width:1px;height:23px;background:#c7c7c7"></div>
<div style="position:absolute;left:0px;top:286px;width:1908px;height:1px;background:#c7c7c7"></div>
<div style="position:absolute;left:0px;top:307px;width:45px;height:1px;background:#c7c7c7"></div>
<div style="position:absolute;left:46px;top:307px;width:1862px;height:1px;background:#e2e2e2"></div>
<div style="position:absolute;left:0px;top:332px;width:45px;height:1px;background:#c7c7c7"></div>
<div style="position:absolute;left:46px;top:332px;width:1862px;height:1px;background:#e2e2e2"></div>
<div style="position:absolute;left:0px;top:353px;width:45px;height:1px;background:#c7c7c7"></div>
<div style="position:absolute;left:46px;top:353px;width:1862px;height:1px;background:#e2e2e2"></div>
<div style="position:absolute;left:0px;top:374px;width:45px;height:1px;background:#c7c7c7"></div>
<div style="position:absolute;left:46px;top:374px;width:1862px;height:1px;background:#e2e2e2"></div>
<div style="position:absolute;left:0px;top:395px;width:45px;height:1px;background:#c7c7c7"></div>
<div style="position:absolute;left:46px;top:395px;width:1862px;height:1px;background:#e2e2e2"></div>
<div style="position:absolute;left:0px;top:416px;width:45px;height:1px;background:#c7c7c7"></div>
<div style="position:absolute;left:46px;top:416px;width:1862px;height:1px;background:#e2e2e2"></div>
<div style="position:absolute;left:0px;top:437px;width:45px;height:1px;background:#c7c7c7"></div>
<div style="position:absolute;left:46px;top:437px;width:1862px;height:1px;background:#e2e2e2"></div>
<div style="position:absolute;left:0px;top:458px;width:45px;height:1px;background:#c7c7c7"></div>
<div style="position:absolute;left:46px;top:458px;width:1862px;height:1px;background:#e2e2e2"></div>
<div style="position:absolute;left:0px;top:479px;width:45px;height:1px;background:#c7c7c7"></div>
<div style="position:absolute;left:46px;top:479px;width:1862px;height:1px;background:#e2e2e2"></div>
<div style="position:absolute;left:0px;top:500px;width:45px;height:1px;background:#c7c7c7"></div>
<div style="position:absolute;left:46px;top:500px;width:1862px;height:1px;background:#e2e2e2"></div>
<div style="position:absolute;left:0px;top:521px;width:45px;height:1px;background:#c7c7c7"></div>
<div style="position:absolute;left:46px;top:521px;width:1862px;height:1px;background:#e2e2e2"></div>
<div style="position:absolute;left:0px;top:542px;width:45px;height:1px;background:#c7c7c7"></div>
<div style="position:absolute;left:46px;top:542px;width:1862px;height:1px;background:#e2e2e2"></div>
<div style="position:absolute;left:0px;top:563px;width:45px;height:1px;background:#c7c7c7"></div>
<div style="position:absolute;left:46px;top:563px;width:1862px;height:1px;background:#e2e2e2"></div>
<div style="position:absolute;left:0px;top:584px;width:45px;height:1px;background:#c7c7c7"></div>
<div style="position:absolute;left:46px;top:584px;width:1862px;height:1px;background:#e2e2e2"></div>
<div style="position:absolute;left:0px;top:605px;width:45px;height:1px;background:#c7c7c7"></div>
<div style="position:absolute;left:46px;top:605px;width:1862px;height:1px;background:#e2e2e2"></div>
<div style="position:absolute;left:0px;top:626px;width:45px;height:1px;background:#c7c7c7"></div>
<div style="position:absolute;left:46px;top:626px;width:1862px;height:1px;background:#e2e2e2"></div>
<div style="position:absolute;left:0px;top:647px;width:45px;height:1px;background:#c7c7c7"></div>
<div style="position:absolute;left:46px;top:647px;width:1862px;height:1px;background:#e2e2e2"></div>
<div style="position:absolute;left:0px;top:668px;width:45px;height:1px;background:#c7c7c7"></div>
<div style="position:absolute;left:46px;top:668px;width:1862px;height:1px;background:#e2e2e2"></div>
<div style="position:absolute;left:0px;top:689px;width:45px;height:1px;background:#c7c7c7"></div>
<div style="position:absolute;left:46px;top:689px;width:1862px;height:1px;background:#e2e2e2"></div>
<div style="position:absolute;left:0px;top:710px;width:45px;height:1px;background:#c7c7c7"></div>
<div style="position:absolute;left:46px;top:710px;width:1862px;height:1px;background:#e2e2e2"></div>
<div style="position:absolute;left:0px;top:731px;width:45px;height:1px;background:#c7c7c7"></div>
<div style="position:absolute;left:46px;top:731px;width:1862px;height:1px;background:#e2e2e2"></div>
<div style="position:absolute;left:0px;top:752px;width:45px;height:1px;background:#c7c7c7"></div>
<div style="position:absolute;left:46px;top:752px;width:1862px;height:1px;background:#e2e2e2"></div>
<div style="position:absolute;left:0px;top:773px;width:45px;height:1px;background:#c7c7c7"></div>
<div style="position:absolute;left:46px;top:773px;width:1862px;height:1px;background:#e2e2e2"></div>
<div style="position:absolute;left:0px;top:794px;width:45px;height:1px;background:#c7c7c7"></div>
<div style="position:absolute;left:46px;top:794px;width:1862px;height:1px;background:#e2e2e2"></div>
<div style="position:absolute;left:0px;top:815px;width:45px;height:1px;background:#c7c7c7"></div>
<div style="position:absolute;left:46px;top:815px;width:1862px;height:1px;background:#e2e2e2"></div>
<div style="position:absolute;left:0px;top:836px;width:45px;height:1px;background:#c7c7c7"></div>
<div style="position:absolute;left:46px;top:836px;width:1862px;height:1px;background:#e2e2e2"></div>
<div style="position:absolute;left:0px;top:857px;width:45px;height:1px;background:#c7c7c7"></div>
<div style="position:absolute;left:46px;top:857px;width:1862px;height:1px;background:#e2e2e2"></div>
<div style="position:absolute;left:0px;top:878px;width:45px;height:1px;background:#c7c7c7"></div>
<div style="position:absolute;left:46px;top:878px;width:1862px;height:1px;background:#e2e2e2"></div>
<div style="position:absolute;left:0px;top:899px;width:45px;height:1px;background:#c7c7c7"></div>
<div style="position:absolute;left:46px;top:899px;width:1862px;height:1px;background:#e2e2e2"></div>
<div style="position:absolute;left:0px;top:920px;width:45px;height:1px;background:#c7c7c7"></div>
<div style="position:absolute;left:46px;top:920px;width:1862px;height:1px;background:#e2e2e2"></div>
<div style="position:absolute;left:0px;top:941px;width:45px;height:1px;background:#c7c7c7"></div>
<div style="position:absolute;left:46px;top:941px;width:1862px;height:1px;background:#e2e2e2"></div>
<div style="position:absolute;left:0px;top:962px;width:45px;height:1px;background:#c7c7c7"></div>
<div style="position:absolute;left:46px;top:962px;width:1862px;height:1px;background:#e2e2e2"></div>
<div style="position:absolute;left:0px;top:983px;width:45px;height:1px;background:#c7c7c7"></div>
<div style="position:absolute;left:46px;top:983px;width:1862px;height:1px;background:#e2e2e2"></div>
<div style="position:absolute;left:45px;top:287px;width:1px;height:696px;background:#c7c7c7"></div>
<div style="position:absolute;left:857px;top:287px;width:1px;height:696px;background:#e2e2e2"></div>
<div style="position:absolute;left:1035px;top:287px;width:1px;height:696px;background:#e2e2e2"></div>
<div style="position:absolute;left:1350px;top:287px;width:1px;height:696px;background:#e2e2e2"></div>
<div style="position:absolute;left:1908px;top:263px;width:1px;height:720px;background:#dadce0"></div>
<div style="position:absolute;left:0px;top:312px;width:45px;height:20px;background:#d3e3fd"></div>
<div style="position:absolute;left:0px;top:308px;width:1908px;height:4px;background:#c7c7c7"></div>
<div style="position:absolute;left:753px;top:263px;width:4px;height:720px;background:#c7c7c7"></div>
<div style="position:absolute;left:0px;top:290.69px;width:45px;text-align:center;font-size:11px;line-height:11px;color:#444746;font-weight:400;white-space:pre">1</div>
<div style="position:absolute;left:0px;top:315.69px;width:45px;text-align:center;font-size:11px;line-height:11px;color:#0b2b6a;font-weight:700;white-space:pre">2</div>
<div style="position:absolute;left:0px;top:336.69px;width:45px;text-align:center;font-size:11px;line-height:11px;color:#444746;font-weight:400;white-space:pre">3</div>
<div style="position:absolute;left:0px;top:357.69px;width:45px;text-align:center;font-size:11px;line-height:11px;color:#444746;font-weight:400;white-space:pre">4</div>
<div style="position:absolute;left:0px;top:378.69px;width:45px;text-align:center;font-size:11px;line-height:11px;color:#444746;font-weight:400;white-space:pre">5</div>
<div style="position:absolute;left:0px;top:399.69px;width:45px;text-align:center;font-size:11px;line-height:11px;color:#444746;font-weight:400;white-space:pre">6</div>
<div style="position:absolute;left:0px;top:420.69px;width:45px;text-align:center;font-size:11px;line-height:11px;color:#444746;font-weight:400;white-space:pre">7</div>
<div style="position:absolute;left:0px;top:441.69px;width:45px;text-align:center;font-size:11px;line-height:11px;color:#444746;font-weight:400;white-space:pre">8</div>
<div style="position:absolute;left:0px;top:462.69px;width:45px;text-align:center;font-size:11px;line-height:11px;color:#444746;font-weight:400;white-space:pre">9</div>
<div style="position:absolute;left:0px;top:483.69px;width:45px;text-align:center;font-size:11px;line-height:11px;color:#444746;font-weight:400;white-space:pre">10</div>
<div style="position:absolute;left:0px;top:504.69px;width:45px;text-align:center;font-size:11px;line-height:11px;color:#444746;font-weight:400;white-space:pre">11</div>
<div style="position:absolute;left:0px;top:525.69px;width:45px;text-align:center;font-size:11px;line-height:11px;color:#444746;font-weight:400;white-space:pre">12</div>
<div style="position:absolute;left:0px;top:546.69px;width:45px;text-align:center;font-size:11px;line-height:11px;color:#444746;font-weight:400;white-space:pre">13</div>
<div style="position:absolute;left:0px;top:567.69px;width:45px;text-align:center;font-size:11px;line-height:11px;color:#444746;font-weight:400;white-space:pre">14</div>
<div style="position:absolute;left:0px;top:588.69px;width:45px;text-align:center;font-size:11px;line-height:11px;color:#444746;font-weight:400;white-space:pre">15</div>
<div style="position:absolute;left:0px;top:609.69px;width:45px;text-align:center;font-size:11px;line-height:11px;color:#444746;font-weight:400;white-space:pre">16</div>
<div style="position:absolute;left:0px;top:630.69px;width:45px;text-align:center;font-size:11px;line-height:11px;color:#444746;font-weight:400;white-space:pre">17</div>
<div style="position:absolute;left:0px;top:651.69px;width:45px;text-align:center;font-size:11px;line-height:11px;color:#444746;font-weight:400;white-space:pre">18</div>
<div style="position:absolute;left:0px;top:672.69px;width:45px;text-align:center;font-size:11px;line-height:11px;color:#444746;font-weight:400;white-space:pre">19</div>
<div style="position:absolute;left:0px;top:693.69px;width:45px;text-align:center;font-size:11px;line-height:11px;color:#444746;font-weight:400;white-space:pre">20</div>
<div style="position:absolute;left:0px;top:714.69px;width:45px;text-align:center;font-size:11px;line-height:11px;color:#444746;font-weight:400;white-space:pre">21</div>
<div style="position:absolute;left:0px;top:735.69px;width:45px;text-align:center;font-size:11px;line-height:11px;color:#444746;font-weight:400;white-space:pre">22</div>
<div style="position:absolute;left:0px;top:756.69px;width:45px;text-align:center;font-size:11px;line-height:11px;color:#444746;font-weight:400;white-space:pre">23</div>
<div style="position:absolute;left:0px;top:777.69px;width:45px;text-align:center;font-size:11px;line-height:11px;color:#444746;font-weight:400;white-space:pre">24</div>
<div style="position:absolute;left:0px;top:798.69px;width:45px;text-align:center;font-size:11px;line-height:11px;color:#444746;font-weight:400;white-space:pre">25</div>
<div style="position:absolute;left:0px;top:819.69px;width:45px;text-align:center;font-size:11px;line-height:11px;color:#444746;font-weight:400;white-space:pre">26</div>
<div style="position:absolute;left:0px;top:840.69px;width:45px;text-align:center;font-size:11px;line-height:11px;color:#444746;font-weight:400;white-space:pre">27</div>
<div style="position:absolute;left:0px;top:861.69px;width:45px;text-align:center;font-size:11px;line-height:11px;color:#444746;font-weight:400;white-space:pre">28</div>
<div style="position:absolute;left:0px;top:882.69px;width:45px;text-align:center;font-size:11px;line-height:11px;color:#444746;font-weight:400;white-space:pre">29</div>
<div style="position:absolute;left:0px;top:903.69px;width:45px;text-align:center;font-size:11px;line-height:11px;color:#444746;font-weight:400;white-space:pre">30</div>
<div style="position:absolute;left:0px;top:924.69px;width:45px;text-align:center;font-size:11px;line-height:11px;color:#444746;font-weight:400;white-space:pre">31</div>
<div style="position:absolute;left:0px;top:945.69px;width:45px;text-align:center;font-size:11px;line-height:11px;color:#444746;font-weight:400;white-space:pre">32</div>
<div style="position:absolute;left:0px;top:966.69px;width:45px;text-align:center;font-size:11px;line-height:11px;color:#444746;font-weight:400;white-space:pre">33</div>
<div style="position:absolute;left:49px;top:290.71px;font-size:13.333px;line-height:13.333px;color:#000000;font-weight:400;white-space:pre;">Image URL</div>
<div style="position:absolute;left:760px;top:290.71px;font-size:13.333px;line-height:13.333px;color:#000000;font-weight:400;white-space:pre;">Inlinks</div>
<div style="position:absolute;left:861px;top:290.71px;font-size:13.333px;line-height:13.333px;color:#000000;font-weight:400;white-space:pre;">Indexability of Linked Page</div>
<div style="position:absolute;left:1039px;top:290.71px;font-size:13.333px;line-height:13.333px;color:#000000;font-weight:400;white-space:pre;">File name</div>
<div style="position:absolute;left:1354px;top:290.71px;font-size:13.333px;line-height:13.333px;color:#000000;font-weight:400;white-space:pre;">Alt tag (Contains formula, Please Don&#x27;t Edit)</div>
<div style="position:absolute;left:49px;top:315.71px;font-size:13.333px;line-height:13.333px;color:#1155cc;text-decoration:underline;text-decoration-skip-ink:none;white-space:pre">https://dcgrevamp.wpenginepowered.com/wp-content/uploads/2025/03/stop.jpg</div>
<div style="position:absolute;left:1354px;top:311.71px;width:554px;height:18px;overflow:hidden;font-size:13.333px;line-height:21.333px;color:#000;white-space:pre">A red stop sign with white letters is in front of leafy green trees.</div>
<div style="position:absolute;left:49px;top:336.71px;font-size:13.333px;line-height:13.333px;color:#1155cc;text-decoration:underline;text-decoration-skip-ink:none;white-space:pre">https://dcgrevamp.wpenginepowered.com/wp-content/uploads/2025/02/reactivating-truck-1.jpg</div>
<div style="position:absolute;left:1354px;top:332.71px;width:554px;height:18px;overflow:hidden;font-size:13.333px;line-height:21.333px;color:#000;white-space:pre">A red semi-truck is parked on a road. Two people stand nearby, looking at a tablet. Hills and a clear sky</div>
<div style="position:absolute;left:49px;top:357.71px;font-size:13.333px;line-height:13.333px;color:#1155cc;text-decoration:underline;text-decoration-skip-ink:none;white-space:pre">https://dcgrevamp.wpenginepowered.com/wp-content/uploads/2025/02/vmt-truck.jpg</div>
<div style="position:absolute;left:1354px;top:353.71px;width:554px;height:18px;overflow:hidden;font-size:13.333px;line-height:21.333px;color:#000;white-space:pre">A hand operating controls on a vehicle dashboard inside a cabin with a steering wheel visible in the frame</div>
<div style="position:absolute;left:49px;top:378.71px;font-size:13.333px;line-height:13.333px;color:#1155cc;text-decoration:underline;text-decoration-skip-ink:none;white-space:pre">https://dcgrevamp.wpenginepowered.com/wp-content/uploads/2025/02/reactivating-truck.jpg</div>
<div style="position:absolute;left:1354px;top:374.71px;width:554px;height:18px;overflow:hidden;font-size:13.333px;line-height:21.333px;color:#000;white-space:pre">A large red truck is parked on a rural road. Two people stand nearby, reviewing documents with</div>
<div style="position:absolute;left:49px;top:399.71px;font-size:13.333px;line-height:13.333px;color:#1155cc;text-decoration:underline;text-decoration-skip-ink:none;white-space:pre">https://dcgrevamp.wpenginepowered.com/wp-content/uploads/2025/02/out-of-service-truck-1.jpg</div>
<div style="position:absolute;left:1354px;top:395.71px;width:554px;height:18px;overflow:hidden;font-size:13.333px;line-height:21.333px;color:#000;white-space:pre">A truck moves quickly across a steel bridge during dusk, with blurred motion effects and a clear sky</div>
<div style="position:absolute;left:49px;top:420.71px;font-size:13.333px;line-height:13.333px;color:#1155cc;text-decoration:underline;text-decoration-skip-ink:none;white-space:pre">https://dcgrevamp.wpenginepowered.com/wp-content/uploads/2025/02/out-of-service-truck.jpg</div>
<div style="position:absolute;left:1354px;top:416.71px;width:554px;height:18px;overflow:hidden;font-size:13.333px;line-height:21.333px;color:#000;white-space:pre">A truck moves quickly across a steel bridge at dusk, with blurred motion and glowing lights, under</div>
<div style="position:absolute;left:49px;top:441.71px;font-size:13.333px;line-height:13.333px;color:#1155cc;text-decoration:underline;text-decoration-skip-ink:none;white-space:pre">https://dcgrevamp.wpenginepowered.com/wp-content/uploads/2025/02/contact.png</div>
<div style="position:absolute;left:1354px;top:437.71px;width:554px;height:18px;overflow:hidden;font-size:13.333px;line-height:21.333px;color:#000;white-space:pre">Woman smiling, wearing a headset, sitting at a desk in front of a computer monitor in a bright office</div>
<div style="position:absolute;left:49px;top:462.71px;font-size:13.333px;line-height:13.333px;color:#1155cc;text-decoration:underline;text-decoration-skip-ink:none;white-space:pre">https://dcgrevamp.wpenginepowered.com/wp-content/uploads/2025/02/deactivating-truck.jpg</div>
<div style="position:absolute;left:1354px;top:458.71px;width:554px;height:18px;overflow:hidden;font-size:13.333px;line-height:21.333px;color:#000;white-space:pre">A man in a blue shirt and cap sits inside a vehicle, holding a smartphone while steering, with a view</div>
<div style="position:absolute;left:49px;top:483.71px;font-size:13.333px;line-height:13.333px;color:#1155cc;text-decoration:underline;text-decoration-skip-ink:none;white-space:pre">https://dcgrevamp.wpenginepowered.com/wp-content/uploads/2025/02/mcs-150-edit-truck.jpg</div>
<div style="position:absolute;left:1354px;top:479.71px;width:554px;height:18px;overflow:hidden;font-size:13.333px;line-height:21.333px;color:#000;white-space:pre">Red semi-truck with a large trailer driving on a highway at sunset, with a bridge and trees along</div>
<div style="position:absolute;left:49px;top:504.71px;font-size:13.333px;line-height:13.333px;color:#1155cc;text-decoration:underline;text-decoration-skip-ink:none;white-space:pre">https://dcgrevamp.wpenginepowered.com/wp-content/uploads/2025/02/beinnial-truck.jpg</div>
<div style="position:absolute;left:1354px;top:500.71px;width:554px;height:18px;overflow:hidden;font-size:13.333px;line-height:21.333px;color:#000;white-space:pre">Red truck driving on a wet, winding road surrounded by dense, dark trees under an overcast sky</div>
<div style="position:absolute;left:49px;top:525.71px;font-size:13.333px;line-height:13.333px;color:#1155cc;text-decoration:underline;text-decoration-skip-ink:none;white-space:pre">https://dcgrevamp.wpenginepowered.com/wp-content/uploads/2025/02/clearinghouse5.png</div>
<div style="position:absolute;left:1354px;top:521.71px;width:554px;height:18px;overflow:hidden;font-size:13.333px;line-height:21.333px;color:#000;white-space:pre">A large clipboard with documents in front of blue buildings, a truck, and a person holding a box</div>
<div style="position:absolute;left:49px;top:546.71px;font-size:13.333px;line-height:13.333px;color:#1155cc;text-decoration:underline;text-decoration-skip-ink:none;white-space:pre">https://dcgrevamp.wpenginepowered.com/wp-content/uploads/2025/02/Rectangle-26.jpg</div>
<div style="position:absolute;left:1354px;top:542.71px;width:554px;height:18px;overflow:hidden;font-size:13.333px;line-height:21.333px;color:#000;white-space:pre">Smiling woman wearing a headset looks at the camera while working in an open-plan office. Another</div>
<div style="position:absolute;left:49px;top:567.71px;font-size:13.333px;line-height:13.333px;color:#1155cc;text-decoration:underline;text-decoration-skip-ink:none;white-space:pre">https://dcgrevamp.wpenginepowered.com/wp-content/uploads/2025/02/Rectangle-23.jpg</div>
<div style="position:absolute;left:1354px;top:563.71px;width:554px;height:18px;overflow:hidden;font-size:13.333px;line-height:21.333px;color:#000;white-space:pre">Person holding a clipboard and writing, standing near a parked truck with a striped container in</div>
<div style="position:absolute;left:49px;top:588.71px;font-size:13.333px;line-height:13.333px;color:#1155cc;text-decoration:underline;text-decoration-skip-ink:none;white-space:pre">https://dcgrevamp.wpenginepowered.com/wp-content/uploads/2025/02/Rectangle-21.jpg</div>
<div style="position:absolute;left:1354px;top:584.71px;width:554px;height:18px;overflow:hidden;font-size:13.333px;line-height:21.333px;color:#000;white-space:pre">Two people smiling in a warehouse setting, with the woman holding a clipboard. Stacks of boxes</div>
<div style="position:absolute;left:49px;top:609.71px;font-size:13.333px;line-height:13.333px;color:#1155cc;text-decoration:underline;text-decoration-skip-ink:none;white-space:pre">https://dcgrevamp.wpenginepowered.com/wp-content/uploads/2025/02/Rectangle-20-2.jpg</div>
<div style="position:absolute;left:1354px;top:605.71px;width:554px;height:18px;overflow:hidden;font-size:13.333px;line-height:21.333px;color:#000;white-space:pre">Cardboard boxes stacked in a brick-walled room with a lamp, shelves, and a ladder nearby.</div>
<div style="position:absolute;left:49px;top:630.71px;font-size:13.333px;line-height:13.333px;color:#1155cc;text-decoration:underline;text-decoration-skip-ink:none;white-space:pre">https://dcgrevamp.wpenginepowered.com/wp-content/uploads/2025/02/about.png</div>
<div style="position:absolute;left:1354px;top:626.71px;width:554px;height:18px;overflow:hidden;font-size:13.333px;line-height:21.333px;color:#000;white-space:pre">A person in protective gear works inside a truck on a snowy street lined with cars and trees. Other</div>
<div style="position:absolute;left:49px;top:651.71px;font-size:13.333px;line-height:13.333px;color:#1155cc;text-decoration:underline;text-decoration-skip-ink:none;white-space:pre">https://dcgrevamp.wpenginepowered.com/wp-content/uploads/2025/02/Rectangle-20.jpg</div>
<div style="position:absolute;left:1354px;top:647.71px;width:554px;height:18px;overflow:hidden;font-size:13.333px;line-height:21.333px;color:#000;white-space:pre">A large truck drives on a highway at sunset, with mountains in the background. The side mirror</div>
<div style="position:absolute;left:49px;top:672.71px;font-size:13.333px;line-height:13.333px;color:#1155cc;text-decoration:underline;text-decoration-skip-ink:none;white-space:pre">https://dcgrevamp.wpenginepowered.com/wp-content/uploads/2025/02/144958941_normal_none.jpg</div>
<div style="position:absolute;left:1354px;top:668.71px;width:554px;height:18px;overflow:hidden;font-size:13.333px;line-height:21.333px;color:#000;white-space:pre">Metal container displaying hazard signs with numbers: 1993, 1268 with flames, 3082, 1824. Cont</div>
<div style="position:absolute;left:49px;top:693.71px;font-size:13.333px;line-height:13.333px;color:#1155cc;text-decoration:underline;text-decoration-skip-ink:none;white-space:pre">https://dcgrevamp.wpenginepowered.com/wp-content/uploads/2025/02/130321189_normal_none.jpg</div>
<div style="position:absolute;left:1354px;top:689.71px;width:554px;height:18px;overflow:hidden;font-size:13.333px;line-height:21.333px;color:#000;white-space:pre">A person in a brown jacket works on a laptop at a desk with a notebook, pen, small plant, and a</div>
<div style="position:absolute;left:49px;top:714.71px;font-size:13.333px;line-height:13.333px;color:#1155cc;text-decoration:underline;text-decoration-skip-ink:none;white-space:pre">https://dcgrevamp.wpenginepowered.com/wp-content/uploads/2024/11/our-services-badge1.jpg</div>
<div style="position:absolute;left:1354px;top:710.71px;width:554px;height:18px;overflow:hidden;font-size:13.333px;line-height:21.333px;color:#000;white-space:pre">Man in a t-shirt and jeans stands confidently next to a large blue truck. Text: &quot;Cutting-Edge Compliance</div>
<div style="position:absolute;left:49px;top:735.71px;font-size:13.333px;line-height:13.333px;color:#1155cc;text-decoration:underline;text-decoration-skip-ink:none;white-space:pre">https://dcgrevamp.wpenginepowered.com/wp-content/uploads/2024/11/USDOT-vs-MC.jpg</div>
<div style="position:absolute;left:1354px;top:731.71px;width:554px;height:18px;overflow:hidden;font-size:13.333px;line-height:21.333px;color:#000;white-space:pre">Red background with headline text: &quot;USDOT Number vs. MC Number: Which One Do You Need</div>
<div style="position:absolute;left:49px;top:756.71px;font-size:13.333px;line-height:13.333px;color:#1155cc;text-decoration:underline;text-decoration-skip-ink:none;white-space:pre">https://dcgrevamp.wpenginepowered.com/wp-content/uploads/2024/11/USDOT-5-Steps-opti.jpg</div>
<div style="position:absolute;left:1354px;top:752.71px;width:554px;height:18px;overflow:hidden;font-size:13.333px;line-height:21.333px;color:#000;white-space:pre">The headline reads &quot;The Ultimate Guide: 5 Steps to Correctly File Your USDOT Number Application</div>
<div style="position:absolute;left:49px;top:777.71px;font-size:13.333px;line-height:13.333px;color:#1155cc;text-decoration:underline;text-decoration-skip-ink:none;white-space:pre">https://dcgrevamp.wpenginepowered.com/wp-content/uploads/2024/11/Truckload-Breakeven-Prices-Surge-in-2025.jpg</div>
<div style="position:absolute;left:1354px;top:773.71px;width:554px;height:18px;overflow:hidden;font-size:13.333px;line-height:21.333px;color:#000;white-space:pre">Headline: &quot;Truckload Breakeven Prices Surge in 2025.&quot; A truck on the road at sunset, dollar signs</div>
<div style="position:absolute;left:49px;top:798.71px;font-size:13.333px;line-height:13.333px;color:#1155cc;text-decoration:underline;text-decoration-skip-ink:none;white-space:pre">https://dcgrevamp.wpenginepowered.com/wp-content/uploads/2025/02/Rectangle-20-1.jpg</div>
<div style="position:absolute;left:1354px;top:794.71px;width:554px;height:18px;overflow:hidden;font-size:13.333px;line-height:21.333px;color:#000;white-space:pre">A man wearing an orange hard hat and safety vest uses a tablet, standing in front of stacked shelves</div>
<div style="position:absolute;left:49px;top:819.71px;font-size:13.333px;line-height:13.333px;color:#1155cc;text-decoration:underline;text-decoration-skip-ink:none;white-space:pre">https://dcgrevamp.wpenginepowered.com/wp-content/uploads/2024/11/Compliance-Review-Benefits.jpg</div>
<div style="position:absolute;left:1354px;top:815.71px;width:554px;height:18px;overflow:hidden;font-size:13.333px;line-height:21.333px;color:#000;white-space:pre">Computer screen display near text &quot;Top Benefits of Regular Compliance Reviews for Transportation</div>
<div style="position:absolute;left:49px;top:840.71px;font-size:13.333px;line-height:13.333px;color:#1155cc;text-decoration:underline;text-decoration-skip-ink:none;white-space:pre">https://dcgrevamp.wpenginepowered.com/wp-content/uploads/2024/11/DOT-Alcohol-Supervisor-Training.jpg</div>
<div style="position:absolute;left:1354px;top:836.71px;width:554px;height:18px;overflow:hidden;font-size:13.333px;line-height:21.333px;color:#000;white-space:pre">Two men, one holding a tablet, discuss in a well-lit office. Text reads &quot;Enroll in Drug and Alcohol</div>
<div style="position:absolute;left:49px;top:861.71px;font-size:13.333px;line-height:13.333px;color:#1155cc;text-decoration:underline;text-decoration-skip-ink:none;white-space:pre">https://dcgrevamp.wpenginepowered.com/wp-content/uploads/2024/11/CSA-Score.jpg</div>
<div style="position:absolute;left:1354px;top:857.71px;width:554px;height:18px;overflow:hidden;font-size:13.333px;line-height:21.333px;color:#000;white-space:pre">Understanding Your CSA Score: What it is and Why it Matters. Red truck on road, surrounded by</div>
<div style="position:absolute;left:49px;top:882.71px;font-size:13.333px;line-height:13.333px;color:#1155cc;text-decoration:underline;text-decoration-skip-ink:none;white-space:pre">https://dcgrevamp.wpenginepowered.com/wp-content/uploads/2024/11/CSA-Categories.jpg</div>
<div style="position:absolute;left:1354px;top:878.71px;width:554px;height:18px;overflow:hidden;font-size:13.333px;line-height:21.333px;color:#000;white-space:pre">Blue truck inside a diamond shape on a red background with headline text “Understanding the CSA</div>
<div style="position:absolute;left:49px;top:903.71px;font-size:13.333px;line-height:13.333px;color:#1155cc;text-decoration:underline;text-decoration-skip-ink:none;white-space:pre">https://dcgrevamp.wpenginepowered.com/wp-content/uploads/2024/11/Are-You-DOT-Compliant-Ready.jpg</div>
<div style="position:absolute;left:1354px;top:899.71px;width:554px;height:18px;overflow:hidden;font-size:13.333px;line-height:21.333px;color:#000;white-space:pre">Text reads &quot;Are You DOT Compliant Ready? What Every Trucking Business Needs to Know&quot; c</div>
<div style="position:absolute;left:46px;top:286px;width:707px;height:1px;background:repeating-linear-gradient(90deg,#8f8f8f 0 4px,transparent 4px 6px)"></div>
<div style="position:absolute;left:757px;top:286px;width:1151px;height:1px;background:repeating-linear-gradient(90deg,#8f8f8f 0 4px,transparent 4px 6px)"></div>
<div style="position:absolute;left:46px;top:920px;width:707px;height:1px;background:repeating-linear-gradient(90deg,#8f8f8f 0 4px,transparent 4px 6px)"></div>
<div style="position:absolute;left:757px;top:920px;width:1151px;height:1px;background:repeating-linear-gradient(90deg,#8f8f8f 0 4px,transparent 4px 6px)"></div>
<div style="position:absolute;left:45px;top:287px;width:1px;height:21px;background:repeating-linear-gradient(180deg,#8f8f8f 0 4px,transparent 4px 6px)"></div>
<div style="position:absolute;left:45px;top:312px;width:1px;height:608px;background:repeating-linear-gradient(180deg,#8f8f8f 0 4px,transparent 4px 6px)"></div>
<div style="position:absolute;left:45px;top:312px;width:708px;height:21px;border:2px solid #1a73e8;box-sizing:border-box"></div>
<div style="position:absolute;left:749px;top:329px;width:8px;height:8px;background:#1a73e8;border-radius:50%;border:1px solid #fff;box-sizing:content-box;margin:-1px"></div>
<div style="position:absolute;left:1909px;top:287px;width:11px;height:696px;background:#ffffff"></div>
<div style="position:absolute;left:1909px;top:263px;width:11px;height:45px;background:#ffffff"></div>
<div style="position:absolute;left:1909px;top:308px;width:11px;height:4px;background:#dde3ee"></div>
<div style="position:absolute;left:1910px;top:313px;width:9px;height:26px;background:#dadce0;border-radius:5px"></div>
<div style="position:absolute;left:1909px;top:950px;width:11px;height:1px;background:#e8eaed"></div>
<div style="position:absolute;left:1909px;top:967px;width:11px;height:1px;background:#e8eaed"></div>
<svg style="position:absolute;left:1910px;top:954px;" width="9" height="6" viewBox="0 0 9 6"><path d="M1 5h7L4.5 1z" fill="#9aa0a6"/></svg>
<svg style="position:absolute;left:1910px;top:971px;" width="9" height="6" viewBox="0 0 9 6"><path d="M1 1h7L4.5 5z" fill="#9aa0a6"/></svg>
<div style="position:absolute;left:0px;top:983px;width:1920px;height:12px;background:#f8f9fa"></div>
<div style="position:absolute;left:0px;top:982px;width:1908px;height:1px;background:#dadce0"></div>
<div style="position:absolute;left:757px;top:983px;width:1151px;height:12px;background:#ffffff"></div>
<div style="position:absolute;left:753px;top:983px;width:4px;height:12px;background:#dde3ee"></div>
<div style="position:absolute;left:759px;top:984px;width:378px;height:9px;background:#dadce0;border-radius:5px"></div>
<div style="position:absolute;left:1877px;top:983px;width:1px;height:12px;background:#e8eaed"></div>
<div style="position:absolute;left:1893px;top:983px;width:1px;height:12px;background:#e8eaed"></div>
<div style="position:absolute;left:1908px;top:983px;width:1px;height:12px;background:#e8eaed"></div>
<svg style="position:absolute;left:1881px;top:985px;" width="6" height="8" viewBox="0 0 6 8"><path d="M5 1v6L1 4z" fill="#9aa0a6"/></svg>
<svg style="position:absolute;left:1898px;top:985px;" width="6" height="8" viewBox="0 0 6 8"><path d="M1 1v6l4-3z" fill="#9aa0a6"/></svg>
<div style="position:absolute;left:0px;top:995px;width:1920px;height:1px;background:#dadce0"></div>
<div style="position:absolute;left:1696px;top:922px;width:216px;height:32px;border-radius:16px;background:#d3e3fd;box-shadow:0 1px 3px rgba(0,0,0,0.25)"></div>
<svg style="position:absolute;left:1706px;top:927px;" width="22" height="22" viewBox="0 0 22 22"><path d="M11 0Q11.9 10.1 22 11Q11.9 11.9 11 22Q10.1 11.9 0 11Q10.1 10.1 11 0z" fill="#0b1c44"/></svg>
<div style="position:absolute;left:1735px;top:930.73px;font-size:14.5px;line-height:14.5px;color:#2b2b2b;font-weight:400;white-space:pre;letter-spacing:0.092px;">Analyze this data</div>
<svg style="position:absolute;left:1866px;top:931px;" width="6" height="16" viewBox="0 0 6 16"><circle cx="3" cy="2.5" r="1.6" fill="#3c4043"/><circle cx="3" cy="8" r="1.6" fill="#3c4043"/><circle cx="3" cy="13.5" r="1.6" fill="#3c4043"/></svg>
<svg style="position:absolute;left:1887px;top:932px;" width="12" height="12" viewBox="0 0 12 12"><path d="M1 1L11 11M11 1L1 11" stroke="#3c4043" stroke-width="1.6"/></svg>
<div style="position:absolute;left:0px;top:996px;width:1920px;height:36px;background:#f9fbfd"></div>
<svg style="position:absolute;left:56px;top:1009px;" width="12" height="12" viewBox="0 0 12 12"><path d="M6 0V12M0 6H12" stroke="#444746" stroke-width="1.8"/></svg>
<svg style="position:absolute;left:95px;top:1009px;" width="14" height="11" viewBox="0 0 14 11"><path d="M0 1H14M0 5.5H14M0 10H14" stroke="#444746" stroke-width="1.7"/></svg>
<div style="position:absolute;left:134px;top:996px;width:162px;height:36px;background:#e1e9f7"></div>
<div style="position:absolute;left:146px;top:1008.15px;font-size:14px;line-height:14px;color:#0b57d0;font-weight:700;white-space:pre;letter-spacing:0.45px">Alt Tag Template</div>
<svg style="position:absolute;left:276px;top:1013px;" width="9" height="5" viewBox="0 0 9 5"><path d="M0 0h9L4.5 4.5z" fill="#0b57d0"/></svg>
<div style="position:absolute;left:308px;top:1008.15px;font-size:14px;line-height:14px;color:#444746;font-weight:400;white-space:pre;letter-spacing:0.647px;-webkit-text-stroke:0.2px #444746">Paste Data from ScreamingFrog</div>
<svg style="position:absolute;left:538px;top:1013px;" width="9" height="5" viewBox="0 0 9 5"><path d="M0 0h9L4.5 4.5z" fill="#444746"/></svg>
<svg style="position:absolute;left:1886px;top:1009px;" width="8" height="12" viewBox="0 0 8 12"><path d="M7 1L2 6l5 5" fill="none" stroke="#444746" stroke-width="1.6"/></svg>
<div style="position:absolute;left:0px;top:1032px;width:1920px;height:48px;background:#eeeeee"></div>
<div style="position:absolute;left:0px;top:1032px;width:1920px;height:1px;background:#d6d6d6"></div>
<svg style="position:absolute;left:21px;top:1042px;" width="22" height="26" viewBox="0 0 22 26"><path d="M3 3L9 1V25L3 23z" fill="#e8651a"/><path d="M9 2l8 3V22l-8 3z" fill="#f28a2e"/><path d="M0 9c3-2 6 2 9 0s6 2 10 0M0 14c3-2 6 2 9 0s6 2 10 0M0 19c3-2 6 2 9 0s6 2 10 0" fill="none" stroke="#f39b4a" stroke-width="1.5"/></svg>
<div style="position:absolute;left:31px;top:1038px;width:15px;height:15px;border-radius:50%;background:#c42b1c;color:#fff;font-size:10px;line-height:15px;text-align:center">1</div>
<div style="position:absolute;left:51px;top:1041.84px;font-size:12px;line-height:12px;color:#1a1a1a;font-weight:400;white-space:pre;">Air: Moderate</div>
<div style="position:absolute;left:51px;top:1057.84px;font-size:12px;line-height:12px;color:#5d5d5d;font-weight:400;white-space:pre;">Today</div>
<svg style="position:absolute;left:573px;top:1045px;" width="23" height="23" viewBox="0 0 23 23"><rect x="0" y="0" width="11" height="11" fill="#1a8fe0"/><rect x="12" y="0" width="11" height="11" fill="#2aa1ef"/><rect x="0" y="12" width="11" height="11" fill="#1683d8"/><rect x="12" y="12" width="11" height="11" fill="#1b92e5"/></svg>
<div style="position:absolute;left:610px;top:1040px;width:216px;height:30px;border-radius:16px;background:#f8f8f8;border:1px solid #dcdcdc"></div>
<svg style="position:absolute;left:621px;top:1048px;" width="15" height="15" viewBox="0 0 15 15"><circle cx="6" cy="6" r="5" fill="none" stroke="#1a1a1a" stroke-width="1.8"/><path d="M9.5 9.5L14 14" stroke="#1a1a1a" stroke-width="2"/></svg>
<div style="position:absolute;left:646px;top:1049.65px;font-size:14px;line-height:14px;color:#5d5d5d;font-weight:400;white-space:pre;letter-spacing:-0.6px">Search</div>
<svg style="position:absolute;left:841px;top:1045px;" width="24" height="24" viewBox="0 0 24 24"><rect x="6" y="1" width="17" height="16" fill="#f0f0f0" stroke="#d8d8d8"/><rect x="1" y="7" width="17" height="16" fill="#1c1c1c"/><rect x="6" y="7" width="12" height="10" fill="#c9c9c9"/></svg>
<svg style="position:absolute;left:885px;top:1044px;" width="24" height="24" viewBox="0 0 24 24"><defs><linearGradient id="cg1" x1="0" y1="0" x2="1" y2="1"><stop offset="0" stop-color="#1fb5f2"/><stop offset="0.55" stop-color="#3d7df3"/><stop offset="1" stop-color="#9b4ef0"/></linearGradient><linearGradient id="cg2" x1="0" y1="1" x2="1" y2="0"><stop offset="0" stop-color="#f7a531"/><stop offset="0.5" stop-color="#f0538a"/><stop offset="1" stop-color="#b45cf2"/></linearGradient></defs><path d="M8 2h7c1.5 0 2.3.8 2.7 2L13 20c-.4 1.3-1.3 2-2.7 2H5c-2.5 0-3.8-2-3-4.3L6 4.2C6.5 2.8 7 2 8 2z" fill="url(#cg1)"/><path d="M16 22H9c-1.5 0-2.3-.8-2.7-2L11 4c.4-1.3 1.3-2 2.7-2H19c2.5 0 3.8 2 3 4.3L18 19.8c-.5 1.4-1 2.2-2 2.2z" fill="url(#cg2)" opacity="0.9"/></svg>
<svg style="position:absolute;left:929px;top:1045px;" width="24" height="24" viewBox="0 0 24 24"><rect x="8" y="2" width="15" height="19" rx="2" fill="#28a8ea"/><rect x="8" y="11" width="15" height="11" fill="#1066c9"/><rect x="1" y="5" width="13" height="13" rx="1.5" fill="#0f5db8"/><circle cx="7.5" cy="11.5" r="3.3" fill="none" stroke="#fff" stroke-width="1.8"/></svg>
<svg style="position:absolute;left:973px;top:1044px;" width="24" height="24" viewBox="0 0 24 24"><rect x="0" y="0" width="24" height="24" fill="#1769e0"/><path d="M4 19L10 5M9 19L15 5M15 19l3-8 2 8" fill="none" stroke="#d8e8ff" stroke-width="2.4"/></svg>
<svg style="position:absolute;left:1017px;top:1045px;" width="24" height="22" viewBox="0 0 24 22"><path d="M1 3a2 2 0 0 1 2-2h6l2 2h10a2 2 0 0 1 2 2v14a2 2 0 0 1-2 2H3a2 2 0 0 1-2-2z" fill="#f8c93e"/><path d="M1 7h22v12a2 2 0 0 1-2 2H3a2 2 0 0 1-2-2z" fill="#fbd75a"/><rect x="7" y="15" width="10" height="5" rx="1.5" fill="#1f6fd1"/></svg>
<svg style="position:absolute;left:1061px;top:1044px;" width="24" height="24" viewBox="0 0 24 24"><circle cx="12" cy="12" r="11.5" fill="#f7f7f7" stroke="#dedede"/><rect x="9.8" y="4.5" width="2.6" height="6.5" rx="1.3" fill="#36c5f0"/><rect x="4.5" y="9.8" width="6.5" height="2.6" rx="1.3" fill="#36c5f0"/><rect x="13" y="4.5" width="2.6" height="6.5" rx="1.3" fill="#2eb67d"/><rect x="13" y="9.8" width="6.5" height="2.6" rx="1.3" fill="#2eb67d"/><rect x="11.6" y="13" width="2.6" height="6.5" rx="1.3" fill="#ecb22e"/><rect x="13" y="13" width="6.5" height="2.6" rx="1.3" fill="#ecb22e"/><rect x="8.4" y="13" width="2.6" height="6.5" rx="1.3" fill="#e01e5a"/><rect x="4.5" y="13" width="6.5" height="2.6" rx="1.3" fill="#e01e5a"/></svg>
<div style="position:absolute;left:1075px;top:1039px;width:16px;height:16px;border-radius:50%;background:#d3134d;border:1px solid #3a1a20;color:#fff;font-size:10px;line-height:16px;text-align:center">1</div>
<svg style="position:absolute;left:1106px;top:1045px;" width="22" height="22" viewBox="0 0 22 22"><rect x="0" y="0" width="22" height="22" rx="2" fill="#2c2c2c"/><path d="M11 21L21 11V19.5A1.5 1.5 0 0 1 19.5 21z" fill="#ffd43b"/></svg>
<div style="position:absolute;left:1186px;top:1037px;width:38px;height:38px;background:#f6f6f6;border-radius:5px;border:1px solid #e3e3e3;box-sizing:border-box"></div>
<svg style="position:absolute;left:1148px;top:1044px;" width="24" height="24" viewBox="0 0 24 24"><circle cx="12" cy="12" r="11.5" fill="#e94235"/><path d="M12 12L22 6.25A11.5 11.5 0 0 1 12 23.5z" fill="#fac20a"/><path d="M12 12L12 23.5A11.5 11.5 0 0 1 2 6.25z" fill="#34a853"/><circle cx="12" cy="12" r="5.2" fill="#fff"/><circle cx="12" cy="12" r="4.2" fill="#1a73e8"/></svg>
<div style="position:absolute;left:1163px;top:1039px;width:16px;height:16px;border-radius:50%;background:radial-gradient(circle at 50% 60%,#2a2a2a 0 35%,#cfcabc 45%)"></div>
<svg style="position:absolute;left:1192px;top:1044px;" width="24" height="24" viewBox="0 0 24 24"><circle cx="12" cy="12" r="11.5" fill="#e94235"/><path d="M12 12L22 6.25A11.5 11.5 0 0 1 12 23.5z" fill="#fac20a"/><path d="M12 12L12 23.5A11.5 11.5 0 0 1 2 6.25z" fill="#34a853"/><circle cx="12" cy="12" r="5.2" fill="#fff"/><circle cx="12" cy="12" r="4.2" fill="#1a73e8"/></svg>
<div style="position:absolute;left:1205px;top:1039px;width:18px;height:18px;border-radius:50%;background:#0e7c66;color:#fff;font-size:10px;line-height:18px;text-align:center">S</div>
<svg style="position:absolute;left:1239px;top:1046px;" width="20" height="20" viewBox="0 0 20 20"><defs><linearGradient id="gg" x1="0" y1="0" x2="0" y2="1"><stop offset="0" stop-color="#4b23b8"/><stop offset="1" stop-color="#24096e"/></linearGradient></defs><rect x="0" y="0" width="20" height="20" rx="4.5" fill="url(#gg)"/><path d="M13.6 6.2A4.6 4.6 0 1 0 14 11.2H10.2" fill="none" stroke="#f1e9ff" stroke-width="2.6"/><path d="M12.3 12.5L14.5 16.3" stroke="#f1e9ff" stroke-width="2.2" stroke-linecap="round"/></svg>
<svg style="position:absolute;left:1281px;top:1044px;" width="24" height="24" viewBox="0 0 24 24"><circle cx="12" cy="12" r="11.5" fill="#e94235"/><path d="M12 12L22 6.25A11.5 11.5 0 0 1 12 23.5z" fill="#fac20a"/><path d="M12 12L12 23.5A11.5 11.5 0 0 1 2 6.25z" fill="#34a853"/><circle cx="12" cy="12" r="5.2" fill="#fff"/><circle cx="12" cy="12" r="4.2" fill="#1a73e8"/></svg>
<div style="position:absolute;left:1293px;top:1039px;width:17px;height:17px;border-radius:50%;background:#8a2fc4;color:#fff;font-size:10px;line-height:17px;text-align:center">B</div>
<svg style="position:absolute;left:1325px;top:1044px;" width="24" height="24" viewBox="0 0 24 24"><circle cx="12" cy="12" r="10.3" fill="#fff" stroke="#6cc04a" stroke-width="2.6"/><path d="M6 5.5c2 .5 3 2.5 5 2.5s3-2.5 5.5-2c-.5 2.5-2.5 3.5-2.5 5.5s2.5 2.5 3.5 4.5c-1.5 1-3.5-.5-5 0s-1.5 3-3 3.5c-.5-2 .5-3.5-1-4.5S5.5 15 4.5 14c1.5-1.5 3-2 3-4S5.5 7.5 6 5.5z" fill="#151515"/></svg>
<div style="position:absolute;left:1070px;top:1072px;width:6px;height:3px;background:#8a8a8a;border-radius:2px"></div>
<div style="position:absolute;left:1114px;top:1072px;width:6px;height:3px;background:#8a8a8a;border-radius:2px"></div>
<div style="position:absolute;left:1158px;top:1072px;width:6px;height:3px;background:#8a8a8a;border-radius:2px"></div>
<div style="position:absolute;left:1246px;top:1072px;width:6px;height:3px;background:#8a8a8a;border-radius:2px"></div>
<div style="position:absolute;left:1290px;top:1072px;width:6px;height:3px;background:#8a8a8a;border-radius:2px"></div>
<div style="position:absolute;left:1334px;top:1072px;width:6px;height:3px;background:#8a8a8a;border-radius:2px"></div>
<div style="position:absolute;left:1197px;top:1072px;width:16px;height:3px;background:#005fb8;border-radius:2px"></div>
<svg style="position:absolute;left:1660px;top:1052px;" width="11" height="7" viewBox="0 0 11 7"><path d="M1 6l4.5-4.5L10 6" fill="none" stroke="#1a1a1a" stroke-width="1.4"/></svg>
<svg style="position:absolute;left:1691px;top:1048px;" width="12" height="16" viewBox="0 0 12 16"><rect x="3.5" y="0.8" width="5" height="9" rx="2.5" fill="none" stroke="#1f6fd1" stroke-width="1.5"/><path d="M1 7.5a5 5 0 0 0 10 0M6 12.5V15" fill="none" stroke="#1f6fd1" stroke-width="1.5"/></svg>
<div style="position:absolute;left:1723.5px;top:1042.8px;font-size:12px;line-height:12px;color:#1a1a1a;white-space:pre;letter-spacing:-1.172px;">ENG</div>
<div style="position:absolute;left:1715px;top:1058.84px;width:40px;text-align:center;font-size:12px;line-height:12px;color:#1a1a1a;font-weight:400;white-space:pre">IN</div>
<svg style="position:absolute;left:1765px;top:1049px;" width="16" height="12" viewBox="0 0 16 12"><path d="M1 4.5a10 10 0 0 1 14 0M3.5 7a6.5 6.5 0 0 1 9 0M6 9.5a3 3 0 0 1 4 0" fill="none" stroke="#1a1a1a" stroke-width="1.4"/><circle cx="8" cy="11" r="1.2" fill="#1a1a1a"/></svg>
<svg style="position:absolute;left:1789px;top:1048px;" width="16" height="14" viewBox="0 0 16 14"><path d="M1 5h3l4-3.5v11L4 9H1z" fill="none" stroke="#1a1a1a" stroke-width="1.3"/><path d="M10 4.5a3.5 3.5 0 0 1 0 5M12 2.5a6.5 6.5 0 0 1 0 9" fill="none" stroke="#1a1a1a" stroke-width="1.3"/></svg>
<svg style="position:absolute;left:1813px;top:1048px;" width="16" height="14" viewBox="0 0 16 14"><rect x="1" y="4" width="12" height="8" rx="1.5" fill="none" stroke="#1a1a1a" stroke-width="1.3"/><rect x="3" y="6" width="8" height="4" fill="#1a1a1a"/><rect x="13.5" y="6.5" width="2" height="3" fill="#1a1a1a"/><path d="M5 0L3 4h3" fill="none" stroke="#1a1a1a" stroke-width="1.2"/></svg>
<div style="position:absolute;left:1830px;top:1042px;width:71px;text-align:right;font-size:12px;line-height:14px;color:#1a1a1a;white-space:pre">2:11 PM</div>
<div style="position:absolute;left:1846px;top:1058px;font-size:12px;line-height:14px;color:#1a1a1a;white-space:pre;letter-spacing:0.179px;">7/10/2025</div></body></html>
